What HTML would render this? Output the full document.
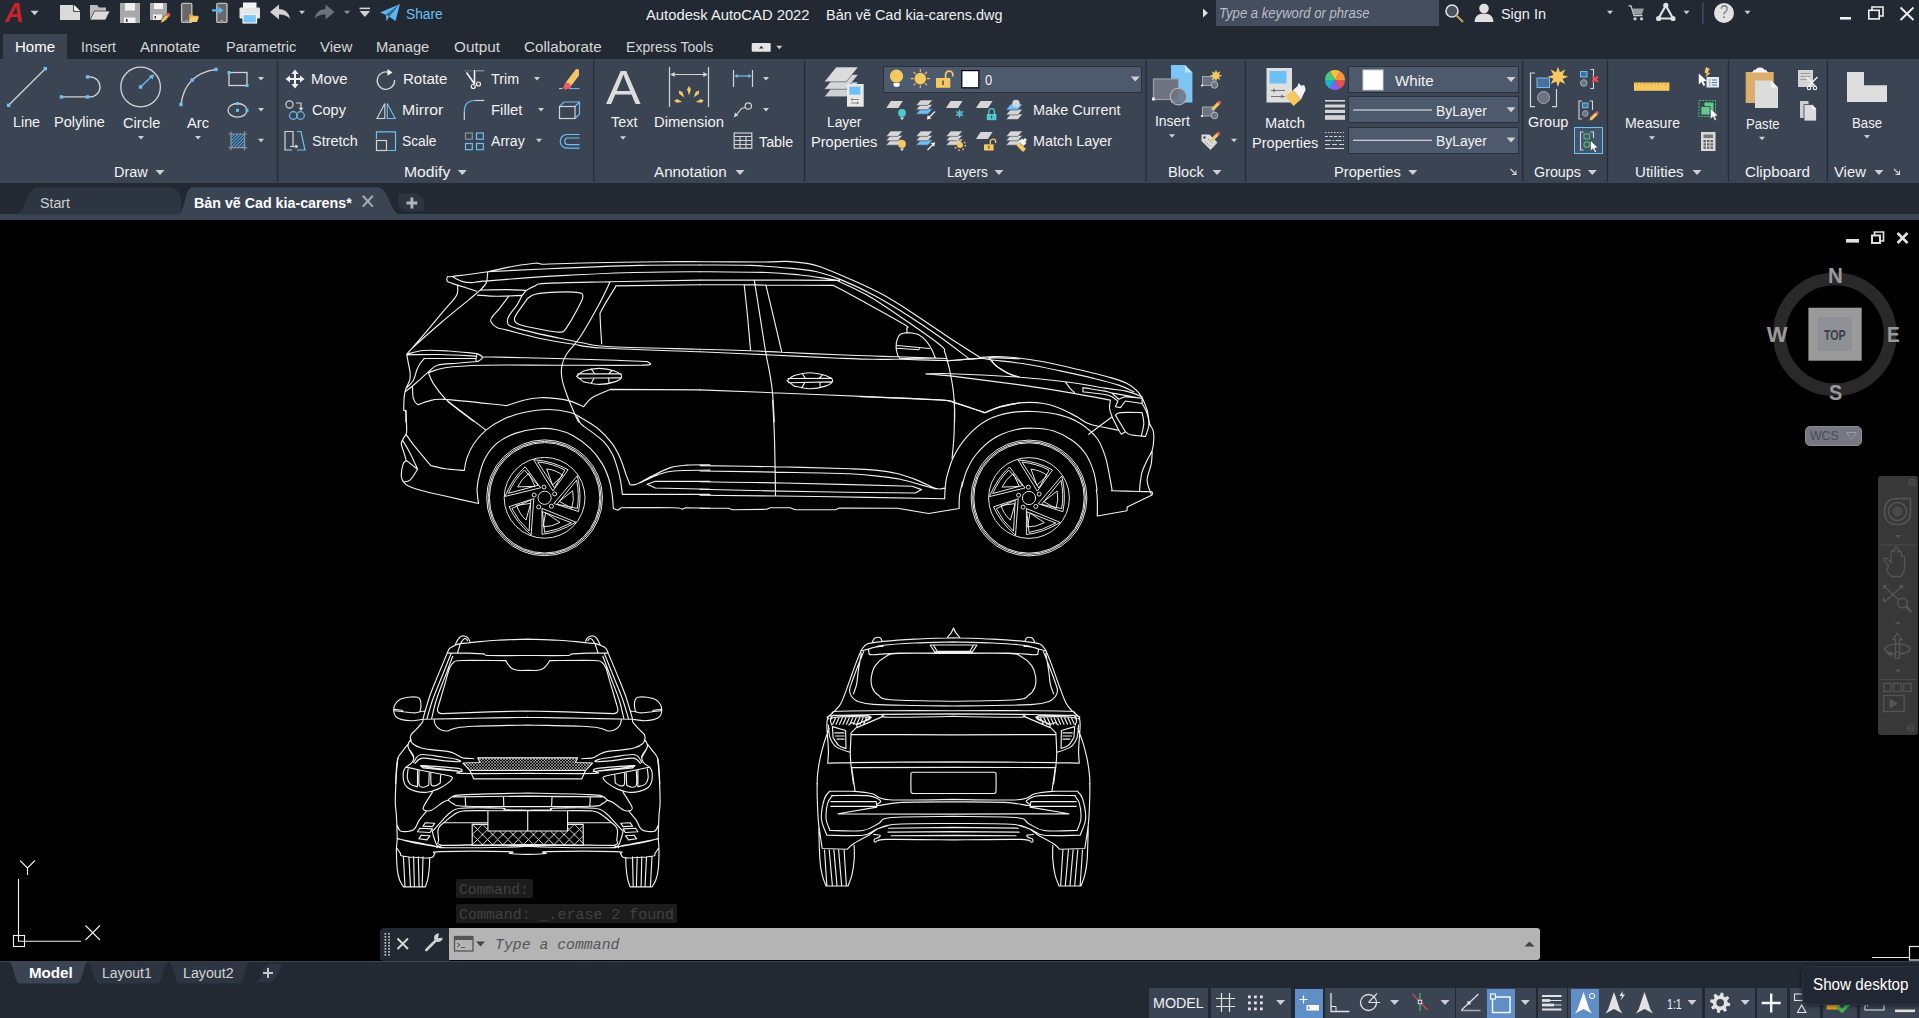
<!DOCTYPE html>
<html lang="en"><head><meta charset="utf-8"><title>Autodesk AutoCAD 2022 - Bản vẽ Cad kia-carens.dwg</title>
<style>
html,body{margin:0;padding:0;background:#222933;overflow:hidden}
#app{position:relative;width:1919px;height:1018px;overflow:hidden;background:#222933;font-family:"Liberation Sans",sans-serif}
#app div{position:absolute}
#app svg{position:absolute;left:0;top:0}
.t{position:absolute;white-space:pre;line-height:1;transform-origin:0 0;display:block}
.m{font-family:"Liberation Mono",monospace}
</style></head>
<body>
<div id="app">
<div class="titlebar" style="left:0px;top:0px;width:1919px;height:59px;background:#222933;"></div>
<div class="ribbon" style="left:0px;top:59px;width:1919px;height:124px;background:#3b4453;"></div>
<div class="filetabs" style="left:0px;top:183px;width:1919px;height:31px;background:#222933;"></div>
<div style="left:0px;top:214px;width:1919px;height:6px;background:#3b4453;"></div>
<div style="left:3px;top:34px;width:64px;height:25px;background:#3b4453;"></div>
<div style="left:1216px;top:0px;width:223px;height:26px;background:#454e5f;"></div>
<div style="left:882.5px;top:65.5px;width:259px;height:27px;background:#4d596d;border:1.2px solid #2a313d;box-sizing:border-box"></div>
<div style="left:1348.4px;top:66.2px;width:170.2px;height:27px;background:#4d596d;border:1.2px solid #2a313d;box-sizing:border-box"></div>
<div style="left:1348.4px;top:96.3px;width:170.2px;height:27px;background:#4d596d;border:1.2px solid #2a313d;box-sizing:border-box"></div>
<div style="left:1348.4px;top:126.5px;width:170.2px;height:27px;background:#4d596d;border:1.2px solid #2a313d;box-sizing:border-box"></div>
<div style="left:1574px;top:127px;width:29px;height:27px;background:#40566f;border:1.3px solid #6cc0f5;box-sizing:border-box"></div>
<div class="canvas" style="left:0px;top:220px;width:1919px;height:740.5px;background:#000000;"></div>
<div style="left:1805.4px;top:425.6px;width:56.3px;height:20px;background:#757781;border-radius:5px;border:1px solid #8a8c95;box-sizing:border-box"></div>
<div style="left:1878px;top:476px;width:40px;height:259px;background:#383838;border-radius:3px"></div>
<div style="left:456px;top:879px;width:77px;height:19px;background:#1c1c1c;border-radius:2px"></div>
<div style="left:456px;top:904.3px;width:221px;height:18.7px;background:#1c1c1c;border-radius:2px"></div>
<div style="left:379.5px;top:927.5px;width:70px;height:33px;background:#222933;border-radius:4px 0 0 4px"></div>
<div style="left:449px;top:927.5px;width:1091px;height:32.5px;background:#b4b4b4;border-radius:0 3px 3px 0"></div>
<div class="statusbar" style="left:0px;top:960.5px;width:1919px;height:57.5px;background:#222933;"></div>
<div style="left:0px;top:960.5px;width:1919px;height:1.3px;background:#3b4453;"></div>
<div style="left:1149.4px;top:988px;width:58.3px;height:30px;background:#3b4453;"></div>
<div style="left:1210.8px;top:988px;width:80.2px;height:30px;background:#3b4453;"></div>
<div style="left:1325px;top:988px;width:129.6px;height:30px;background:#3b4453;"></div>
<div style="left:1456px;top:988px;width:79.8px;height:30px;background:#3b4453;"></div>
<div style="left:1537.7px;top:988px;width:29.2px;height:30px;background:#3b4453;"></div>
<div style="left:1568.3px;top:988px;width:134.0px;height:30px;background:#3b4453;"></div>
<div style="left:1705px;top:988px;width:50.4px;height:30px;background:#3b4453;"></div>
<div style="left:1756.9px;top:988px;width:29.8px;height:30px;background:#3b4453;"></div>
<div style="left:1789.8px;top:988px;width:30.2px;height:30px;background:#3b4453;"></div>
<div style="left:1823px;top:988px;width:33.5px;height:30px;background:#3b4453;"></div>
<div style="left:1859.6px;top:988px;width:59.4px;height:30px;background:#3b4453;"></div>
<div style="left:1294.6px;top:988.5px;width:28.7px;height:29.5px;background:#5f8fc6;"></div>
<div style="left:1486.9px;top:988.5px;width:28.1px;height:29.5px;background:#5f8fc6;"></div>
<div style="left:1571px;top:988.5px;width:28px;height:29.5px;background:#5f8fc6;"></div>
<svg id="drawing" width="1919" height="1018" viewBox="0 0 1919 1018" fill="none">
<g id="car-side">
<path d="M447.6 276.7C448.6 276.6 446.8 277 453.4 276.2C460.1 275.4 477.6 273.4 487.7 271.7C497.7 270 505.3 267.6 513.5 266.2C521.7 264.7 533 263.6 536.9 263L541.9 264.2C548.6 264 562.2 263.4 582 263C601.7 262.6 640.8 261.9 660.5 261.7C680.1 261.5 693.4 261.7 700 261.7M487.7 271.7C497.8 271.2 523.1 269.8 548.6 268.7C574.1 267.6 615.2 266 640.4 265.4C665.7 264.7 690.1 265.1 700 265M452.6 276.7C454.1 277.5 458.6 280.4 461.8 281.4C465 282.4 467.6 282.6 471.8 282.6C476 282.5 472.6 282 486.8 280.9C501 279.8 532.5 277.3 556.9 275.9C581.4 274.5 609.9 273.2 633.7 272.5C657.6 271.8 689 271.8 700 271.7M447.6 276.7C447.5 277.1 446.6 278.3 446.8 279.2C446.9 280.1 446.5 281 448.4 282.1C450.4 283.1 453.7 283.9 458.4 285.4C463.2 286.9 473.8 290.3 476.8 291.2M487.7 271.7C487.6 272.5 487.6 274.8 487.3 276.7C487.1 278.7 487.2 281.2 486 283.4C484.8 285.6 483.1 287.3 480.2 290.1C477.2 292.8 475.1 294.5 468.5 300.1C461.8 305.6 449.5 315.4 440.1 323.5C430.6 331.5 416.4 344.3 411.7 348.5M457.6 285.4C457.6 286.4 458 289.7 457.6 291.7C457.2 293.8 458 293.7 455.1 297.6C452.2 301.5 445.4 308.8 440.1 315.1C434.8 321.4 429 328.6 423.4 335.1C417.8 341.7 409.5 351.1 406.7 354.3M480.2 290.1C484.6 290 499.2 289.5 506.9 289.6C514.5 289.6 522.9 290.3 526.1 290.4C527.6 289.6 532 287.1 535.2 285.9C538.4 284.7 532.7 284.1 545.3 283.4C557.8 282.7 584.6 282.3 610.4 281.7C636.2 281.2 685.1 280.3 700 280.1M477.6 295.1C480.8 295.3 489.5 296.2 496.8 296.2C504.2 296.3 517.7 295.5 521.9 295.4M526.1 290.4C525.4 291.3 523.4 293.5 521.9 295.9C520.4 298.4 519 301.9 516.9 305.1C514.8 308.3 511 312.3 509.4 315.1C507.8 317.9 507.2 320 507.4 321.8C507.5 323.6 507.5 324.6 510.2 326C512.9 327.4 515.8 328.2 523.6 330.1C531.3 332.1 547.2 335.6 556.9 337.6C566.7 339.7 573.6 341.2 582 342.7C590.3 344.1 587.4 345.4 607 346.5C626.7 347.6 684.5 348.7 700 349.2M527.7 298.4C529 297.7 530.4 295.3 535.2 294.2C540.1 293.2 549.7 292.3 556.9 292.1C564.2 291.8 574.3 291.9 578.6 292.6C583 293.2 582.5 294.1 582.8 295.9C583.1 297.7 583 298.3 580.3 303.4C577.7 308.6 570.3 322 567 326.8C563.6 331.6 564.7 331.7 560.3 332.1C555.8 332.6 547.2 330.6 540.3 329.3C533.3 328 522.9 326 518.5 324.3C514.2 322.6 514.7 321.1 514.4 319.3C514.1 317.5 516.5 314.4 516.9 313.4zM508.5 296.7C507.1 298.6 503 304.1 500.2 307.6C497.4 311.1 493.4 315.2 491.8 317.6C490.3 320 490.2 320.1 491 321.8C491.8 323.5 494.2 326.2 496.8 327.6C499.5 329 499.6 328.3 506.9 330.1C514.1 331.9 529.1 336.1 540.3 338.5C551.4 340.8 563.3 342.7 573.6 344.3C583.9 345.9 581 346.7 602 348C623.1 349.2 683.7 351.2 700 351.8M610 282.1C608.1 285.9 603.6 296 598.7 305.1C593.7 314.2 585.6 328.7 580.3 336.8C575 344.9 570 348.8 567 353.5C563.9 358.2 562.8 361 562 365.2C561.1 369.4 561.1 373.5 562 378.5C562.8 383.6 564.7 389.1 567 395.2C569.2 401.4 573.4 410.8 575.3 415.3C577.3 419.7 578.1 420.8 578.6 422M615.4 287.1C613.7 289.8 607.9 299.1 605.4 303.4C602.8 307.8 600.9 311.5 600 313.1C600.1 315.7 600.4 323.3 600.7 328.5C601 333.6 601.5 341.3 601.7 343.8M615.4 285.9L700 284.7M406.7 354.3C409.5 353.7 416.4 351.1 423.4 350.5C430.3 349.9 439.5 350.5 448.4 351C457.3 351.5 472.1 353.1 476.8 353.5C477.6 353.9 480.7 355.1 481.5 356C482.3 356.9 482.5 357.9 481.8 358.8C481.2 359.8 478.3 361.1 477.6 361.5C477.4 361.3 476.1 361.4 476 360.2C475.8 359 476.7 355.3 476.8 354.3M406.7 354.8C412.3 354.8 428.4 354.3 440.1 354.5C451.8 354.7 470.7 355.9 476.8 356.2M475.1 358.5L424.2 358.5C423.5 359.3 421.3 361.6 420.1 363.5C418.8 365.5 417.8 367.4 416.7 370.2C415.6 373 415.2 377.2 413.4 380.2C411.6 383.3 407.1 387.2 405.9 388.6M477.6 361.5C474.2 361.8 463.5 362.6 456.8 363.2C450.1 363.8 442.3 363.7 437.6 365.2C432.8 366.6 431.3 369.5 428.4 371.9C425.5 374.2 422.6 377.2 420.1 379.4C417.5 381.6 415.9 383.1 413.4 385.2C410.9 387.3 406.4 390.8 405 391.9M481.8 356.8C494.3 357.1 534.7 358 556.9 358.5C579.2 359.1 600.4 359.7 615.4 360.2C630.4 360.7 641.8 361.3 647.1 361.5L650.4 363.5C648.8 363.8 656 364.9 640.4 365.2C624.8 365.5 583.1 365.2 556.9 365.2C530.8 365.2 502.1 364.8 483.5 365.2C464.8 365.6 454.3 366.4 445.1 367.7C435.9 368.9 431.2 371.9 428.4 372.7M406.7 354.3C407 355.9 407.8 360.6 408.4 363.5C408.9 366.4 409.8 369.1 410 371.9C410.3 374.7 410.4 377.4 409.7 380.2C409 383 406.8 385.8 405.9 388.6C404.9 391.3 404.6 393.3 404.2 396.9C403.8 400.5 403.8 408 403.7 410.3L405.9 411.1L405.9 422M412.5 386.9C412.7 388.8 412.5 395.7 413.4 398.6C414.2 401.5 416.3 403.6 417.5 404.4C418.8 405.3 419.1 404.1 420.9 403.6C422.7 403 424.4 401.8 428.4 401.1C432.4 400.4 432 398.7 445.1 399.4C458.2 400.2 496.6 404.6 506.9 405.6C509.6 404.7 518 401.6 523.6 400.3C529.1 398.9 534.7 398 540.3 397.7C545.8 397.5 551.9 398 556.9 398.6C562 399.1 565.8 399.7 570.3 401.1C574.8 402.4 581.4 405.7 583.7 406.6C585 405.1 587.6 400.6 592 397.7C596.5 394.9 607.3 390.8 610.4 389.4L700 389.9M428.4 372.7C429.2 374.5 430.6 379.2 433.4 383.6C436.2 387.9 441.2 394.4 445.1 398.6C449 402.8 452 404.8 456.8 408.6C461.5 412.4 470.7 419 473.5 421.1M576.6 376.4C577.8 375.5 579.9 372.4 583.7 371C587.4 369.7 594 368.4 599.2 368.4C604.3 368.4 610.8 369.7 614.5 371C618.3 372.4 621.7 374.6 621.7 376.4C621.7 378.2 618.3 380.6 614.5 381.9C610.8 383.2 604.3 384.4 599.2 384.4C594 384.4 586.2 382.3 583.7 381.9zM577.8 373.9L621.2 373.9M578.3 378.2L620.4 377.7M591.2 368.9L594.5 373.5M612 370.5L608.7 373.9M591.2 383.6L594 378.2M609 382.7L608.7 377.9" stroke="#f0f0f0" stroke-width="1.15" fill="none" stroke-linejoin="round" stroke-linecap="round"/>
<path d="M700 261.7C710.6 261.7 749 262.1 763.4 262C777.9 262 779.6 261.1 786.8 261.4C794 261.6 801.3 262.5 806.8 263.4C812.4 264.2 813 264.1 820.2 266.7C827.4 269.3 839.7 274.5 850.3 279.2C860.8 283.9 872.5 289 883.6 295.1C894.8 301.2 905.9 308.7 917 315.9C928.2 323.2 939.8 331.5 950.4 338.5C961 345.4 975.5 354.5 980.5 357.7M700 265C708.3 265.1 734.8 264.8 750.1 265.4C765.4 265.9 780.7 267.3 791.8 268.4C802.9 269.4 808.5 269.8 816.9 271.7C825.2 273.7 832.2 276 841.9 280.1C851.6 284.1 864.2 289.9 875.3 295.9C886.4 301.9 897.6 308.8 908.7 315.9C919.8 323 932.1 331.4 942.1 338.5C952.1 345.6 964.3 355.2 968.8 358.5M700 271.7C711.1 271.8 750.1 272 766.8 272.5C783.5 273.1 790.4 274.1 800.2 275C809.9 276 819.1 277.5 825.2 278.4C831.3 279.3 834.9 280.1 836.9 280.4M700 280.1C709 280.1 732.3 280 754.3 280.1C776.2 280.1 818.1 280.3 831.9 280.4C845.7 280.4 836.1 280.4 836.9 280.4C841.9 282.8 856.4 289 866.9 295.1C877.5 301.1 888.1 308.4 900.3 316.8C912.6 325.1 933 339.3 940.4 345.2C947.8 351 943.5 349.6 944.6 351.8C945.6 354.1 946.4 357.4 946.7 358.5M700 284.7C707.4 284.7 733.2 284.7 744.2 284.7C755.2 284.8 751.1 284.9 765.9 285.1C780.8 285.2 822.3 285.3 833.6 285.4C839.1 288.4 855.1 296.9 866.9 303.4C878.8 310 897.9 320.5 904.5 324.6C911.1 328.8 906.3 327.1 906.7 328.5C907.1 329.8 907 331.9 907 332.6M744.2 284.7C744.8 290.1 746.5 305.8 747.6 316.8C748.6 327.8 750.1 345 750.6 350.7M754.3 280.1C755.2 286.2 758.2 304.5 760.1 316.8C762 329 764.3 343.8 765.9 353.5C767.6 363.2 769 368.5 770.1 375.2C771.2 381.9 771.9 385.8 772.6 393.6C773.3 401.4 774 417.2 774.3 422M765.9 285.1C767.2 290.3 770.8 305.6 773.5 316.8C776.1 328 780.4 346.3 781.8 352.2M700 349.2C708.3 349.4 736.4 350.2 750.1 350.7C763.7 351.2 767.1 351.5 781.8 352.2C796.5 352.9 823.3 354.2 838.6 354.8C853.9 355.5 863.9 355.7 873.6 356C883.4 356.3 884.8 356.4 897 356.8C909.2 357.3 938.5 358.2 946.7 358.5M700 351.8C711.1 352.3 743.7 353.8 766.8 354.8C789.9 355.9 820.8 357.4 838.6 358.2C856.4 358.9 863.3 359.2 873.6 359.3C883.9 359.5 888.1 359.2 900.3 359.3C912.6 359.5 935.9 360.5 947.1 360.5C958.2 360.5 960.2 359.8 967.1 359.3C974.1 358.9 980 357.8 988.8 357.7C997.6 357.6 1014.7 358.7 1019.9 358.8M907 332.6C905.9 332.9 902 333.1 900.3 334.3C898.7 335.6 897.7 337.8 897 340.2C896.3 342.5 896 346 896.2 348.5C896.3 351 897.2 353.5 897.8 355.2C898.5 356.8 899.6 358 900 358.5L935.4 358.2C934.7 356.6 932.9 351.5 931.2 348.5C929.5 345.5 927.5 342.4 925.4 340.2C923.3 337.9 920.9 336 918.7 334.8C916.5 333.6 913.1 333.3 912 333zM897 345.5L929.5 348.5M897 348.2L918.7 349.8L920 347.7M946.7 358.5C947.4 361 949.3 368 950.4 373.5C951.5 379.1 952.7 385.8 953.4 391.9C954.1 398 954.4 405.3 954.6 410.3C954.8 415.3 954.6 420 954.6 422M988.8 357.7C989.9 358.9 992.7 362.8 995.5 365.2C998.3 367.6 1002.7 370.2 1005.5 371.9C1008.3 373.5 1011.1 374.7 1012.2 375.2M787.1 380.7C788.3 379.9 790.5 376.9 794.3 375.5C798.1 374.2 804.6 372.7 809.8 372.7C815.1 372.7 821.7 374.2 825.5 375.5C829.4 376.9 832.7 379 832.7 380.7C832.7 382.5 829.4 384.7 825.5 386.1C821.7 387.4 815.1 388.7 809.8 388.7C804.6 388.7 796.9 386.5 794.3 386.1zM788.1 378.5L831.9 378.2M788.5 382.7L831.6 381.9M802.2 373.5L805.2 378.2M822.7 374.9L819.4 378.2M801.8 387.9L804.8 382.4M820.2 387.2L819.9 382.2M700 389.9C712.1 390.4 743.7 391.6 772.6 392.7C801.6 393.9 845.1 395.7 873.6 396.9C902.1 398.2 930.1 399.3 943.7 400.3C957.4 401.2 948.6 400.7 955.4 402.8C962.2 404.8 979.8 411.1 984.6 412.8C987.3 411.8 994.6 408.6 1000.5 406.9C1006.4 405.3 1016.6 403.5 1019.9 402.8" stroke="#f0f0f0" stroke-width="1.15" fill="none" stroke-linejoin="round" stroke-linecap="round"/>
<path d="M979.4 357.5C981.2 357.4 985.1 356.8 990.2 356.7C995.4 356.7 1001.3 356.4 1010.3 357.2C1019.2 358 1032.5 359.7 1043.6 361.7C1054.8 363.7 1065.9 366.6 1077 369.2C1088.2 371.9 1102.1 375.2 1110.4 377.6C1118.8 379.9 1122.7 381.2 1127.1 383.4C1131.6 385.6 1134.6 388.6 1137.1 390.9C1139.6 393.3 1141.3 396.5 1142.1 397.6M946.8 360.9C952.4 360.5 973 358.6 980.2 358.4C987.4 358.2 982.4 358.7 990.2 359.7C998 360.7 1015.3 362.4 1026.9 364.2C1038.6 366.1 1049.2 368.5 1060.3 370.9C1071.5 373.3 1084 376 1093.7 378.4C1103.5 380.8 1112.1 382.9 1118.8 385.1C1125.4 387.3 1131.3 390.7 1133.8 391.8M989.4 357.5C990.4 358.8 992.6 362.7 995.2 365.1C997.9 367.4 1002.2 370 1005.2 371.7C1008.3 373.5 1011.1 374.5 1013.6 375.4C1016.1 376.3 1019.2 376.9 1020.3 377.2M925.9 373.9C930 373.9 934.4 373.2 950.2 373.7C965.9 374.3 1001.1 375.9 1020.3 377.2C1039.5 378.6 1050.9 379.9 1065.3 381.8C1079.8 383.6 1096.8 386.8 1107.1 388.4C1117.4 390 1121.3 390 1127.1 391.4C1133 392.8 1139.6 395.9 1142.1 396.8M925.9 373.9C930 374.2 933.3 373.9 950.2 375.9C967 377.9 1006.4 383 1026.9 385.9C1047.5 388.8 1059.8 391.1 1073.7 393.4C1087.6 395.8 1104.3 399 1110.4 400.1M1065.3 381.8C1066 382.7 1068 385.8 1069.5 387.6C1071 389.4 1073.7 391.8 1074.5 392.6M1082.9 387.6C1086.3 388.2 1098.6 390 1103.7 390.9C1108.9 391.9 1107.6 392.2 1113.8 393.4C1119.9 394.6 1136 397.3 1140.5 398.1M1082.9 391.8C1086.3 392.2 1098.9 393.4 1103.7 394.3C1108.6 395.1 1110.7 396.4 1112.1 396.8M1082.9 387.6L1082.9 391.8M1112.1 393.4L1118.8 399.3L1124.6 396.8L1142.1 398.1L1142.1 403.5L1125.4 401L1120.4 407.6L1115.4 406.8L1117.9 401L1112.1 396.8M1110.4 400.1C1110.3 401.5 1109.3 405.7 1109.6 408.5C1109.9 411.2 1110.7 413.5 1112.1 416.8C1113.5 420.2 1116.4 425.6 1117.9 428.5C1119.5 431.4 1120.7 433.4 1121.3 434.3L1125.4 431.8L1115.4 415.1C1116.3 414.7 1116 413.1 1120.4 412.6C1124.9 412.2 1138.5 412.6 1142.1 412.6M1125.4 431.8C1126.3 432.3 1127.1 434.1 1130.5 434.8C1133.8 435.6 1143 436.2 1145.5 436.5C1146 434.6 1148.5 429 1148.8 425.2C1149.1 421.3 1148.3 417.1 1147.1 413.5C1146 409.9 1143 405.1 1142.1 403.5M1142.1 412.6C1142.4 414.4 1143.9 419.6 1143.8 423.5C1143.7 427.4 1141.7 433.9 1141.3 436M1142.1 397.6C1143 399.7 1145.9 405.8 1147.1 410.1C1148.4 414.4 1148.7 420.2 1149.6 423.5C1150.6 426.8 1152.3 427.7 1153 430.2C1153.7 432.7 1154 435.2 1153.8 438.5C1153.7 441.9 1153.3 446.6 1152.2 450.2C1151 453.8 1148.8 456.6 1147.1 460.2C1145.5 463.8 1143.3 468 1142.1 471.9C1141 475.8 1140.6 480.4 1140.1 483.6C1139.7 486.8 1139.7 489.8 1139.6 491.1M1152.2 450.2C1152 452.4 1152.2 458.5 1151.3 463.6C1150.5 468.6 1147.1 475.1 1147.1 480.3C1147.1 485.4 1150.6 492.1 1151.3 494.4M1112.1 416.8L1088.7 434.3M945.1 488.6C945.4 486.6 945.4 482.2 946.8 476.9C948.2 471.6 950.2 463.6 953.5 456.9C956.8 450.2 961.3 443 966.8 436.8C972.4 430.7 979.6 424.2 986.9 420.2C994.1 416.1 1002.5 414.1 1010.3 412.6C1018 411.2 1025.3 411.1 1033.6 411.5C1042 411.9 1052.5 413.1 1060.3 415.1C1068.1 417.1 1074.2 419.6 1080.4 423.5C1086.5 427.4 1092.9 432.9 1097.1 438.5C1101.2 444.1 1103.2 449.9 1105.4 456.9C1107.6 463.8 1109.3 474.7 1110.4 480.3C1111.5 485.8 1111.8 488.6 1112.1 490.3M961.8 486.9C962.7 484.1 964.3 475.8 966.8 470.2C969.3 464.7 972.4 458.8 976.9 453.5C981.3 448.3 987.4 442.4 993.6 438.5C999.7 434.6 1006.9 431.9 1013.6 430.2C1020.3 428.4 1026.9 428 1033.6 428.2C1040.3 428.3 1047.3 429 1053.7 431C1060.1 433 1066.7 436.4 1072 440.2C1077.3 443.9 1081.8 448.3 1085.4 453.5C1089 458.8 1091.8 465.8 1093.7 471.9C1095.7 478 1096.5 487.2 1097.1 490.3M985.2 412.6C988 411.5 995.5 407.6 1001.9 406C1008.3 404.3 1016.6 403 1023.6 402.6C1030.6 402.2 1037.5 402.5 1043.6 403.5C1049.8 404.4 1054.8 406.2 1060.3 408.5C1065.9 410.7 1072 414.2 1077 416.8C1082 419.5 1083.4 422.1 1090.4 424.3C1097.3 426.5 1114 429.2 1118.8 430.2M860 396.8C868.3 397.1 896.2 397.9 910.1 398.4C924 399 936.1 399.4 943.5 400.1C950.8 400.8 947.4 400.5 954.3 402.6C961.3 404.7 980.1 411 985.2 412.6" stroke="#f0f0f0" stroke-width="1.15" fill="none" stroke-linejoin="round" stroke-linecap="round"/>
<path d="M464.3 470.5C464.7 468.4 465.3 462.8 466.8 458.4C468.3 454.1 470.3 449 473.5 444.2C476.7 439.5 481 434.2 486 430.1C491 425.9 497.3 422.1 503.5 419.2C509.8 416.3 516 414.1 523.6 412.5C531.1 410.9 540.8 409.5 548.6 409.5C556.4 409.5 564.7 411 570.3 412.5C575.9 414 577.3 415.6 582 418.4C586.7 421.1 593.7 425 598.7 429.2C603.7 433.4 608.4 438.5 612 443.4C615.7 448.3 618 453.1 620.4 458.4C622.7 463.7 624.6 470.7 626.2 475.1C627.8 479.5 629.4 483.2 630.1 484.8C631.2 484.7 633.7 485.3 637.1 484C640.5 482.6 644.9 479.5 650.4 476.8C656 474.1 664.3 469.6 670.5 467.6C676.6 465.7 680.6 465.6 687.2 465.1C693.7 464.6 706.1 464.8 709.9 464.8M577 416.7C577.7 417.9 578.9 421.8 581.2 424.2C583.4 426.6 586.6 428 590.3 430.9C594.1 433.8 600.1 438 603.7 441.7C607.3 445.5 609.8 449.2 612 453.4C614.3 457.6 615.7 462.3 617 466.8C618.4 471.2 619.5 475.5 620.4 480.1C621.3 484.7 622.1 492 622.4 494.3L709.9 494.3M478.5 503.5C478.3 501 476.9 493.8 477.1 488.5C477.4 483.2 478.7 477.1 480.2 471.8C481.6 466.5 483.2 461.5 486 456.8C488.8 452 492 447.3 496.8 443.4C501.7 439.5 508.5 435.8 515.2 433.4C521.9 430.9 530 429.3 536.9 428.7C543.9 428.1 550.8 428.5 556.9 429.7C563.1 430.9 568.1 432.8 573.6 435.9C579.2 439 585.6 443.8 590.3 448.4C595.1 453 599 458.4 602 463.4C605.1 468.4 607 473.5 608.7 478.5C610.4 483.5 611.3 488.5 612 493.5C612.8 498.5 613.1 506 613.4 508.5L617.9 510.2L621.2 507.7C630 507.7 663.7 507.4 673.8 507.7C684 508 680.8 509.1 682.2 509.3L685.5 507.7L709.9 508.2M405.9 410C406 413.4 406.7 426 406.7 430.1C406.7 434.1 406.6 432.6 405.9 434.2C405.2 435.9 403.3 438.4 402.5 440.1C401.8 441.7 401.1 442 401.4 444.2C401.6 446.5 403.4 450.8 404.2 453.4C404.9 456.1 406 458.4 405.9 460.1C405.7 461.8 404.1 461.8 403.4 463.4C402.7 465.1 402 467.9 401.7 470.1C401.4 472.3 401.1 474.8 401.4 476.8C401.6 478.7 402.2 480.3 403.4 481.8C404.5 483.3 405 484.4 408.4 486C411.7 487.5 416.7 489.2 423.4 491C430.1 492.8 439.2 494.7 448.4 496.8C457.6 498.9 473.5 502.4 478.5 503.5M405.9 434.2C407.4 436.3 412.1 443 415 446.7C418 450.5 420.7 453.6 423.4 456.8C426 459.9 429.6 464.1 430.9 465.6C433.3 466.1 439.5 468 445.1 468.8C450.7 469.6 461.1 470.2 464.3 470.5M448.4 401.7L486 430.1M402.5 440.1C403.5 441.7 406.3 446.2 408.4 450.1C410.5 454 413.5 460.2 415 463.4C416.6 466.6 417.1 468.3 417.5 469.3C416.3 471.1 412.4 478 410 480.1C407.7 482.2 404.5 481.5 403.4 481.8M405.9 460.1L417.5 469.3M647.1 484.3L655.4 481.3L709.9 481.3M647.1 484.3L655.4 488L709.9 489.3M640.4 482.6C643.2 481.4 651.5 477.1 657.1 475.1C662.7 473.2 665 471.8 673.8 471C682.6 470.1 703.9 470.3 709.9 470.1" stroke="#f0f0f0" stroke-width="1.15" fill="none" stroke-linejoin="round" stroke-linecap="round"/>
<path d="M700 465.6C712.5 465.8 750.1 466.2 775.1 466.8C800.2 467.3 833.6 468.2 850.3 468.8C866.9 469.3 867.5 469.3 875.3 470.1C883.1 470.9 890 471.8 897 473.5C904 475.1 910.5 477.6 917 480.1C923.6 482.6 931.6 487.1 936.2 488.5C940.8 489.8 943.2 488.2 944.6 488.1M700 471C712.5 471.1 750.1 471.6 775.1 472.1C800.2 472.6 832.2 473 850.3 473.8C868.3 474.6 875.3 475.9 883.6 476.8C892 477.7 893.9 477.9 900.3 479.3C906.7 480.7 916.1 483.5 922 485.1C928 486.8 933.9 488.3 936.2 489M700 481.8C713.9 482 748.1 482.2 783.5 483C818.8 483.7 890.6 485.8 912 486.3L921.7 489.6L915.4 493C898.9 492.8 852.8 492.4 816.9 491.8C781 491.2 719.5 489.7 700 489.3M700 495.2C719.5 495.4 776.1 495.9 816.9 496.5C857.6 497.1 923.3 498.4 944.6 498.8L945.1 488.5M772.6 400C772.9 405.6 773.9 422.3 774.3 433.4C774.7 444.5 774.9 456.5 775.1 466.8C775.3 477.1 775.4 490.4 775.5 495.2M959.1 508.5C959.2 506.3 959 499.6 959.6 495.2C960.2 490.7 962 484 962.4 481.8M700 508.2L728.4 508.2L732.6 509.8L766.8 509.3L770.1 507.7L790.2 507.7L795.2 509.7L835.2 509.7L839.4 508L897 508.2L928.7 513.5L959.1 508.5M954.6 400C954.5 405.6 954.5 423.7 954.1 433.4C953.7 443.1 952.4 454.3 952.1 458.4" stroke="#f0f0f0" stroke-width="1.15" fill="none" stroke-linejoin="round" stroke-linecap="round"/>
<path d="M1096.3 490C1096.5 491.5 1097.2 494.4 1097.3 498.8C1097.5 503.1 1097.3 513.2 1097.3 516L1127 510.7L1127.2 506.9L1152 495M1111.3 490.7C1115.9 490.8 1132.2 491.3 1138.8 491.5C1145.5 491.7 1149.2 491.3 1151.4 491.9C1153.5 492.5 1151.9 494.5 1152 495" stroke="#f0f0f0" stroke-width="1.15" fill="none" stroke-linejoin="round" stroke-linecap="round"/>
<g stroke="#f0f0f0" stroke-width="0.95" fill="none" stroke-linejoin="round">
<circle cx="544.6" cy="497.8" r="57.9"/><circle cx="544.6" cy="497.8" r="56.4"/><circle cx="544.6" cy="497.8" r="55.2"/>
<circle cx="544.6" cy="497.8" r="40.4"/><circle cx="544.6" cy="497.8" r="6.6"/>
<path d="M533.7 459.7Q553.7 461.4 568.1 469.8L552.9 490.9zM537.6 461.9Q553.1 463.6 564.8 470L554.5 487.9zM546.6 468.9Q555.8 470 562.9 475.3L552.5 485.1zM546 487a2 2 0 1 0 -4 0a2 2 0 1 0 4 0M577.4 475.7Q582 495.2 578.5 511.5L553.8 503.5zM576.6 480.1Q579.7 495.3 577.3 508.4L557.1 504.2zM572.7 490.8Q574.5 499.9 571.7 508.2L559.2 501.4zM556.7 493.9a2 2 0 1 0 -4 0a2 2 0 1 0 4 0M575.8 522.2Q558.6 532.6 542 534.3L542 508.3zM571.4 522.8Q557.8 530.4 544.6 532.2L542.4 511.6zM560 522.4Q551.9 526.9 543.1 526.8L545.6 512.8zM553.4 506.2a2 2 0 1 0 -4 0a2 2 0 1 0 4 0M531.1 535Q515.9 521.9 509.1 506.7L533.8 498.6zM529.1 531Q517.6 520.4 511.9 508.4L530.8 500zM526 520Q519.2 513.7 516.6 505.3L530.7 503.4zM540.7 506.9a2 2 0 1 0 -4 0a2 2 0 1 0 4 0M505 496.4Q512.8 477.9 525.2 466.8L540.6 487.8zM508.3 493.3Q514.7 479.1 524.4 470L538.2 485.3zM517.7 486.9Q521.6 478.5 528.8 473.5L535 486.3zM536.2 495a2 2 0 1 0 -4 0a2 2 0 1 0 4 0"/></g>
<g stroke="#f0f0f0" stroke-width="0.95" fill="none" stroke-linejoin="round">
<circle cx="1029" cy="498" r="57.9"/><circle cx="1029" cy="498" r="56.4"/><circle cx="1029" cy="498" r="55.2"/>
<circle cx="1029" cy="498" r="40.4"/><circle cx="1029" cy="498" r="6.6"/>
<path d="M1018.1 459.9Q1038.1 461.6 1052.5 470L1037.3 491.1zM1022 462.1Q1037.5 463.8 1049.2 470.2L1038.9 488.1zM1031 469.1Q1040.2 470.2 1047.3 475.5L1036.9 485.3zM1030.4 487.2a2 2 0 1 0 -4 0a2 2 0 1 0 4 0M1061.8 475.9Q1066.4 495.4 1062.9 511.7L1038.2 503.7zM1061 480.3Q1064.1 495.5 1061.7 508.6L1041.5 504.4zM1057.1 491Q1058.9 500.1 1056.1 508.4L1043.6 501.6zM1041.1 494.1a2 2 0 1 0 -4 0a2 2 0 1 0 4 0M1060.2 522.4Q1043 532.8 1026.4 534.5L1026.4 508.5zM1055.8 523Q1042.2 530.6 1029 532.4L1026.8 511.8zM1044.4 522.6Q1036.3 527.1 1027.5 527L1030 513zM1037.8 506.4a2 2 0 1 0 -4 0a2 2 0 1 0 4 0M1015.5 535.2Q1000.3 522.1 993.5 506.9L1018.2 498.8zM1013.5 531.2Q1002 520.6 996.3 508.6L1015.2 500.2zM1010.4 520.2Q1003.6 513.9 1001 505.5L1015.1 503.6zM1025.1 507.1a2 2 0 1 0 -4 0a2 2 0 1 0 4 0M989.4 496.6Q997.2 478.1 1009.6 467L1025 488zM992.7 493.5Q999.1 479.3 1008.8 470.2L1022.6 485.5zM1002.1 487.1Q1006 478.7 1013.2 473.7L1019.4 486.5zM1020.6 495.2a2 2 0 1 0 -4 0a2 2 0 1 0 4 0"/></g>
</g>
<g id="car-front">
<path d="M527.7 639.1C522.6 639.3 505.7 639.7 497.2 640.2C488.8 640.6 481.9 641.4 476.9 641.9C472 642.4 469.1 642.8 467.5 643M527.7 639.1C532.8 639.3 549.7 639.7 558.2 640.2C566.7 640.6 573.6 641.4 578.5 641.9C583.5 642.4 586.3 642.8 587.9 643M455 645.3C455.6 644.3 457.1 640.6 458.2 639.1C459.2 637.6 460.1 636.7 461.3 636.3C462.5 635.8 464 635.9 465.2 636.3C466.4 636.6 467.5 637.4 468.3 638.3C469.1 639.1 469.6 640.9 469.9 641.4M600.4 645.3C599.9 644.3 598.3 640.6 597.3 639.1C596.2 637.6 595.3 636.7 594.2 636.3C593 635.8 591.4 635.9 590.3 636.3C589.1 636.6 587.9 637.4 587.1 638.3C586.3 639.1 585.8 640.9 585.6 641.4M457.4 653.1C457.9 651.6 459.5 646.1 460.5 643.8C461.5 641.4 462.7 639.9 463.6 639.1C464.5 638.2 465.3 638.5 466 638.8C466.6 639 467.3 640.3 467.5 640.6M598.1 653.1C597.5 651.6 596 646.1 594.9 643.8C593.9 641.4 592.7 639.9 591.8 639.1C590.9 638.2 590.1 638.5 589.5 638.8C588.8 639 588.2 640.3 587.9 640.6M527.7 655.5C521.3 655.5 496.9 655.7 489.4 655.5C482 655.2 486.8 654.3 483.2 653.9C479.5 653.5 473.5 653.3 467.5 653.1C461.5 653 450.6 653.1 447.2 653.1M527.7 655.5C534.1 655.5 558.6 655.7 566 655.5C573.5 655.2 568.6 654.3 572.3 653.9C575.9 653.5 581.9 653.3 587.9 653.1C593.9 653 604.8 653.1 608.2 653.1M447.2 653.1C447.6 652.4 448.3 649.8 449.6 648.4C450.9 647.1 453.1 646.2 455 645.3C457 644.5 459.2 643.8 461.3 643.4C463.4 643.1 466.5 643.1 467.5 643M608.2 653.1C607.8 652.4 607.2 649.8 605.9 648.4C604.6 647.1 602.4 646.2 600.4 645.3C598.5 644.5 596.2 643.8 594.2 643.4C592.1 643.1 589 643.1 587.9 643M527.7 670.3C526 670.3 520.3 670.7 517.6 670.3C514.8 669.9 513 669.2 511.3 668C509.6 666.8 508.3 664.5 507.4 663.3C506.5 662.1 506.1 661.1 505.8 660.6C498.4 660.6 470 660.2 461.3 660.5C452.6 660.8 455.4 661.3 453.5 662.5C451.5 663.8 450.9 664.9 449.6 668C448.3 671.1 447.2 675.9 445.7 681.3C444.1 686.6 441.5 695.3 440.2 700C438.8 704.7 437.8 707.3 437.5 709.4C437.3 711.5 437.9 711.8 438.6 712.5C439.3 713.2 441.2 713.5 441.7 713.6C449.7 713.3 475.1 712.4 489.4 711.9C503.8 711.5 521.3 711.1 527.7 711M527.7 670.3C529.4 670.3 535.2 670.7 537.9 670.3C540.6 669.9 542.4 669.2 544.1 668C545.8 666.8 547.1 664.5 548 663.3C549 662.1 549.4 661.1 549.6 660.6C557 660.6 585.4 660.2 594.2 660.5C602.9 660.8 600 661.3 602 662.5C603.9 663.8 604.6 664.9 605.9 668C607.2 671.1 608.2 675.9 609.8 681.3C611.4 686.6 613.9 695.3 615.3 700C616.6 704.7 617.7 707.3 617.9 709.4C618.2 711.5 617.5 711.8 616.8 712.5C616.1 713.2 614.2 713.5 613.7 713.6C605.8 713.3 580.4 712.4 566 711.9C551.7 711.5 534.1 711.1 527.7 711M447.2 653.1C445.9 656.3 442.3 664.9 439.4 671.9C436.5 678.9 432.8 687.5 430 695.3C427.3 703.2 424.2 714.9 423 718.8M608.2 653.1C609.5 656.3 613.2 664.9 616 671.9C618.9 678.9 622.7 687.5 625.4 695.3C628.2 703.2 631.3 714.9 632.5 718.8M451.1 653.5C449.7 657 445.5 667.5 442.5 675C439.5 682.5 435.8 691.2 433.1 698.5C430.5 705.8 427.9 715.4 426.9 718.8M604.3 653.5C605.8 657 609.9 667.5 612.9 675C615.9 682.5 619.7 691.2 622.3 698.5C624.9 705.8 627.5 715.4 628.6 718.8M452.7 656.3C451.5 659.4 448.4 667.7 445.7 675C442.9 682.3 438.6 692.7 436.3 700C433.9 707.3 432.4 715.7 431.6 718.8M602.8 656.3C603.9 659.4 607.1 667.7 609.8 675C612.5 682.3 616.8 692.7 619.2 700C621.5 707.3 623.1 715.7 623.9 718.8M423 719.3C431.5 719.1 456.3 718.7 473.8 718.3C491.3 718 518.7 717.4 527.7 717.2M632.5 719.3C624 719.1 599.1 718.7 581.7 718.3C564.2 718 536.7 717.4 527.7 717.2M433.9 718.8C434.2 719.8 434.5 723.3 435.5 725C436.5 726.8 438.2 728.4 440.2 729.4C442.1 730.4 444.7 731.2 447.2 731C449.7 730.8 450.6 729 455 728.2C459.5 727.4 461.7 726.8 473.8 726.3C485.9 725.8 518.7 725.3 527.7 725M621.5 718.8C621.3 719.8 621 723.3 620 725C618.9 726.8 617.2 728.4 615.3 729.4C613.3 730.4 610.7 731.2 608.2 731C605.8 730.8 604.8 729 600.4 728.2C596 727.4 593.8 726.8 581.7 726.3C569.5 725.8 536.7 725.3 527.7 725M423 719.3C422.9 719.8 423.4 721 422.2 722.7C421 724.4 417.8 727.8 416 729.7C414.1 731.7 412.2 732.9 411.3 734.4C410.4 736 410.2 737.6 410.5 739.1C410.7 740.7 411.1 742.4 412.8 743.8C414.5 745.2 417 746.7 420.6 747.7C424.3 748.8 430 749.4 434.7 750.1C439.4 750.7 445.1 750.8 448.8 751.6C452.4 752.4 454.3 753.7 456.6 754.7C458.9 755.8 460 757.2 462.9 757.9C465.7 758.5 472 758.5 473.8 758.7M632.5 719.3C632.6 719.8 632.1 721 633.2 722.7C634.4 724.4 637.7 727.8 639.5 729.7C641.3 731.7 643.3 732.9 644.2 734.4C645.1 736 645.2 737.6 645 739.1C644.7 740.7 644.3 742.4 642.6 743.8C640.9 745.2 638.5 746.7 634.8 747.7C631.2 748.8 625.4 749.4 620.7 750.1C616 750.7 610.3 750.8 606.7 751.6C603 752.4 601.2 753.7 598.9 754.7C596.5 755.8 595.5 757.2 592.6 757.9C589.7 758.5 583.5 758.5 581.7 758.7M411.3 739.9C410.9 740.3 409.4 741.1 408.9 742.2C408.4 743.4 407.7 745.1 408.1 746.9C408.5 748.8 410.4 751.5 411.3 753.2C412.2 754.9 413.2 756.4 413.6 757.1M644.2 739.9C644.6 740.3 646 741.1 646.5 742.2C647.1 743.4 647.7 745.1 647.3 746.9C646.9 748.8 645.1 751.5 644.2 753.2C643.3 754.9 642.2 756.4 641.8 757.1M408.9 743C408 744.2 405.3 747.6 403.4 750.1C401.6 752.5 399.1 754.7 398 757.9C396.8 761 396.8 764.5 396.4 768.8C396 773.2 395.8 781.5 395.6 784M646.5 743C647.4 744.2 650.2 747.6 652 750.1C653.8 752.5 656.3 754.7 657.5 757.9C658.6 761 658.6 764.5 659 768.8C659.4 773.2 659.7 781.5 659.8 784M423 719.3C421 719.5 414.8 720.6 411.3 720.7C407.7 720.7 404.5 720.3 401.9 719.6C399.3 718.9 397 717.9 395.6 716.4C394.3 715 393.9 712.9 393.8 711C393.6 709 393.8 706.7 394.9 704.7C395.9 702.8 398.1 700.5 400.3 699.3C402.5 698 405.3 697.6 408.1 697.2C411 696.9 415.5 696.8 417.5 697.2C419.5 697.7 419.8 698.5 420.3 700C420.9 701.5 421 704.3 421 706.3C420.9 708.2 420 710.8 419.9 711.8M632.5 719.3C634.4 719.5 640.7 720.6 644.2 720.7C647.7 720.7 651 720.3 653.6 719.6C656.2 718.9 658.5 717.9 659.8 716.4C661.2 715 661.6 712.9 661.7 711C661.8 709 661.7 706.7 660.6 704.7C659.5 702.8 657.3 700.5 655.1 699.3C652.9 698 650.2 697.6 647.3 697.2C644.4 696.9 640 696.8 637.9 697.2C635.9 697.7 635.7 698.5 635.1 700C634.5 701.5 634.4 704.3 634.5 706.3C634.6 708.2 635.4 710.8 635.6 711.8M394.9 710.7C396.3 710.8 400.2 711.4 403.4 711.8C406.7 712.1 411.7 712.9 414.4 712.9C417.1 712.9 418.2 712.1 419.9 711.8C421.6 711.4 423.8 711.1 424.6 711M660.6 710.7C659.2 710.8 655.3 711.4 652 711.8C648.7 712.1 643.8 712.9 641.1 712.9C638.3 712.9 637.3 712.1 635.6 711.8C633.9 711.4 631.7 711.1 630.9 711M394.9 709.4C396 709.5 400.6 709.8 401.9 710.2C403.2 710.6 402.5 711.5 402.7 711.8M660.6 709.4C659.4 709.5 654.9 709.8 653.6 710.2C652.3 710.6 652.9 711.5 652.8 711.8" stroke="#f0f0f0" stroke-width="1.15" fill="none" stroke-linejoin="round" stroke-linecap="round"/>
<path d="M398 757.8C397.7 760.4 396.9 766.2 396.4 773.4C396 780.7 395.3 794.6 395.3 801.6C395.3 808.6 396.1 809.7 396.4 815.7C396.7 821.6 397.2 831.8 397.2 837.5C397.2 843.3 396.4 844.8 396.4 850C396.4 855.3 396.7 863.9 397.2 868.8C397.7 873.8 398.5 876.8 399.5 879.7C400.6 882.7 402.8 885.6 403.4 886.8L425.3 886.8C425.7 885.6 427 882.7 427.7 879.7C428.3 876.8 428.9 872.5 429.2 868.8C429.6 865.2 429.6 859.7 429.7 857.9M657.5 757.8C657.7 760.4 658.6 766.2 659 773.4C659.5 780.7 660.1 794.6 660.1 801.6C660.1 808.6 659.3 809.7 659 815.7C658.7 821.6 658.3 831.8 658.3 837.5C658.3 843.3 659 844.8 659 850C659 855.3 658.8 863.9 658.3 868.8C657.7 873.8 657 876.8 655.9 879.7C654.9 882.7 652.7 885.6 652 886.8L630.1 886.8C629.7 885.6 628.4 882.7 627.8 879.7C627.1 876.8 626.5 872.5 626.2 868.8C625.9 865.2 625.8 859.7 625.7 857.9M403.4 856.9L405 886.8M652 856.9L650.4 886.8M408.9 856.9L410.5 886.8M646.5 856.9L645 886.8M413.6 856.9L414.4 886.8M641.8 856.9L641.1 886.8M418.3 856.9L419.1 886.8M637.2 856.9L636.4 886.8M423 856.9L422.2 886.8M632.5 856.9L633.2 886.8M397.2 848.5C397.7 849.3 399.3 851.9 400.3 853.2C401.4 854.5 398.5 855.5 403.4 856.3C408.4 857.1 424.8 858.3 430 857.9C435.2 857.5 433 855 434.7 854C436.4 852.9 427.9 852 440.2 851.6C452.4 851.2 496.6 851.3 508.2 851.6C519.8 851.9 506.5 853 509.7 853.5C513 854 524.7 854.3 527.7 854.4M658.3 848.5C657.7 849.3 656.2 851.9 655.1 853.2C654.1 854.5 657 855.5 652 856.3C647.1 857.1 630.6 858.3 625.4 857.9C620.2 857.5 622.4 855 620.7 854C619 852.9 627.5 852 615.3 851.6C603 851.2 558.9 851.3 547.3 851.6C535.7 851.9 549 853 545.7 853.5C542.4 854 530.7 854.3 527.7 854.4M397.2 838.3C399.5 839 404.5 840.8 411.3 842.2C418 843.7 432.1 846 437.8 846.9C443.6 847.8 434.5 847.6 445.7 847.7C456.9 847.8 491.4 847.5 505.1 847.2C518.7 847 523.9 846.3 527.7 846.1M658.3 838.3C655.9 839 651 840.8 644.2 842.2C637.4 843.7 623.3 846 617.6 846.9C611.9 847.8 621 847.6 609.8 847.7C598.6 847.8 564.1 847.5 550.4 847.2C536.7 847 531.5 846.3 527.7 846.1M441 845.4L527.7 844.6M614.5 845.4L527.7 844.6M405.8 767.2C405.4 768 403.8 769.5 403.4 771.9C403.1 774.2 403.1 778.7 403.8 781.3C404.4 783.9 405.3 785.8 407.4 787.5C409.4 789.2 412.7 790.6 416 791.4C419.2 792.2 423.2 792.6 426.9 792.2C430.5 791.8 434.5 790.5 437.8 789.1C441.2 787.6 444.9 785.3 447.2 783.6C449.6 781.9 451.6 780.2 451.9 778.9C452.2 777.6 454 777.2 448.8 775.8C443.6 774.4 427.4 771.7 420.6 770.3C413.9 768.9 410.2 768 408.1 767.5zM649.7 767.2C650 768 651.7 769.5 652 771.9C652.3 774.2 652.3 778.7 651.7 781.3C651 783.9 650.1 785.8 648.1 787.5C646.1 789.2 642.8 790.6 639.5 791.4C636.2 792.2 632.2 792.6 628.6 792.2C624.9 791.8 621 790.5 617.6 789.1C614.2 787.6 610.6 785.3 608.2 783.6C605.9 781.9 603.8 780.2 603.5 778.9C603.3 777.6 601.5 777.2 606.7 775.8C611.9 774.4 628 771.7 634.8 770.3C641.6 768.9 645.2 768 647.3 767.5zM408.1 768.8C408 770.3 407 775.5 407.4 778.1C407.7 780.7 408.8 783 410.5 784.4C412.2 785.8 416.3 786.3 417.5 786.7L417.5 770.3M647.3 768.8C647.4 770.3 648.5 775.5 648.1 778.1C647.7 780.7 646.7 783 645 784.4C643.3 785.8 639.1 786.3 637.9 786.7L637.9 770.3M419.1 771.1C419.1 773.4 418.3 782.5 419.1 785.2C419.9 787.9 422.2 787.2 423.8 787.2C425.4 787.2 427.9 785.5 428.8 785.2L429.2 772.7M636.4 771.1C636.4 773.4 637.2 782.5 636.4 785.2C635.6 787.9 633.3 787.2 631.7 787.2C630.1 787.2 627.5 785.5 626.7 785.2L626.2 772.7M430.8 773.4C430.9 775.3 430.5 782.7 431.3 784.7C432.1 786.7 434 785.9 435.5 785.6C437 785.4 439.4 783.6 440.2 783.1L440.7 775M624.6 773.4C624.6 775.3 625 782.7 624.2 784.7C623.4 786.7 621.4 785.9 620 785.6C618.5 785.4 616 783.6 615.3 783.1L614.8 775M413.6 762.5C414.8 761.2 415.8 755.6 420.6 754.7C425.5 753.8 436.5 756.3 442.5 757C448.5 757.8 453.7 758.6 456.6 759.4C459.5 760.2 462.1 761.5 459.7 761.7C457.4 761.9 448.8 761.2 442.5 760.6C436.3 760 426.8 757.7 422.2 758.1C417.6 758.6 416.3 762.4 415.2 763.3M641.8 762.5C640.7 761.2 639.6 755.6 634.8 754.7C630 753.8 618.9 756.3 612.9 757C606.9 757.8 601.7 758.6 598.9 759.4C596 760.2 593.4 761.5 595.7 761.7C598.1 761.9 606.7 761.2 612.9 760.6C619.2 760 628.7 757.7 633.2 758.1C637.8 758.6 639.1 762.4 640.3 763.3M421.4 766.4C421.8 766.3 417.6 765.3 423.8 765.6C429.9 766 451.9 767.5 458.2 768.4C464.4 769.4 461.3 770.7 461.3 771.1C461.3 771.5 464.5 771.6 458.2 771.1C451.8 770.6 428.9 768.5 423 768zM634 766.4C633.6 766.3 637.8 765.3 631.7 765.6C625.6 766 603.5 767.5 597.3 768.4C591 769.4 594.2 770.7 594.2 771.1C594.2 771.5 590.9 771.6 597.3 771.1C603.7 770.6 626.6 768.5 632.5 768zM409.7 750C410.4 751 413.2 754.2 413.6 756.3C414 758.3 413.3 760.7 412 762.5C410.7 764.3 406.8 766.4 405.8 767.2M645.7 750C645.1 751 642.2 754.2 641.8 756.3C641.5 758.3 642.1 760.7 643.4 762.5C644.7 764.3 648.6 766.4 649.7 767.2M432.4 792.2C430.9 794.6 425.1 803.3 423.8 806.3C422.5 809.3 423.2 809.5 424.6 810.2C425.9 810.8 428.6 811.5 431.6 810.2C434.6 808.9 439.7 804.1 442.5 802.4C445.4 800.7 447.7 800.4 448.8 800M623.1 792.2C624.5 794.6 630.4 803.3 631.7 806.3C633 809.3 632.2 809.5 630.9 810.2C629.6 810.8 626.9 811.5 623.9 810.2C620.9 808.9 615.8 804.1 612.9 802.4C610.1 800.7 607.7 800.4 606.7 800M448 800C448.9 799.4 450.5 797 453.5 796.1C456.5 795.2 453.6 795.1 466 794.6C478.4 794 517.4 793.2 527.7 793M607.5 800C606.5 799.4 605 797 602 796.1C599 795.2 601.8 795.1 589.5 794.6C577.1 794 538 793.2 527.7 793M448 800C448.9 800.7 450.7 802.9 453.5 803.9C456.2 805 452 805.8 464.4 806.3C476.8 806.7 517.2 806.5 527.7 806.6M607.5 800C606.5 800.7 604.7 802.9 602 803.9C599.2 805 603.4 805.8 591 806.3C578.7 806.7 538.3 806.5 527.7 806.6M453.5 796.9L527.7 796.1M602 796.9L527.7 796.1M465.2 797.7L465.7 806.3M590.3 797.7L589.8 806.3M503.5 796.9L503.8 806.6M552 796.9L551.6 806.6M426.1 811.7C424.9 813.2 421.2 817.3 419.1 820.3C417 823.3 416.6 827.9 413.6 829.7C410.6 831.5 403.8 832.1 401.1 831.3C398.4 830.5 397.8 826.1 397.2 825M629.3 811.7C630.5 813.2 634.3 817.3 636.4 820.3C638.5 823.3 638.8 827.9 641.8 829.7C644.8 831.5 651.6 832.1 654.3 831.3C657.1 830.5 657.6 826.1 658.3 825M432.4 831.3C434.1 829.5 439.5 823.5 442.5 820.3C445.5 817.2 447.2 814.6 450.3 812.5C453.5 810.5 452.7 808.9 461.3 808.2C469.9 807.4 494.6 807.9 501.9 808.2C509.2 808.4 500.8 809.4 505.1 809.7C509.4 810.1 523.9 810.1 527.7 810.2M623.1 831.3C621.4 829.5 615.9 823.5 612.9 820.3C609.9 817.2 608.2 814.6 605.1 812.5C602 810.5 602.8 808.9 594.2 808.2C585.6 807.4 560.8 807.9 553.5 808.2C546.2 808.4 554.7 809.4 550.4 809.7C546.1 810.1 531.5 810.1 527.7 810.2M432.4 831.3C432.6 832.3 433.1 835.2 433.9 837.5C434.7 839.9 435.9 843.9 437.1 845.4C438.2 846.8 440.3 846 441 846.1M623.1 831.3C622.8 832.3 622.3 835.2 621.5 837.5C620.7 839.9 619.6 843.9 618.4 845.4C617.2 846.8 615.1 846 614.5 846.1M437.8 831.3C438.1 830.5 438.1 828.3 439.4 826.6C440.7 824.9 443.3 823.1 445.7 821.1C448 819.2 450.6 816.6 453.5 814.9C456.3 813.2 457.1 811.7 462.9 811C468.6 810.3 483.7 810.7 487.9 810.7M617.6 831.3C617.4 830.5 617.4 828.3 616 826.6C614.7 824.9 612.1 823.1 609.8 821.1C607.5 819.2 604.8 816.6 602 814.9C599.1 813.2 598.3 811.7 592.6 811C586.9 810.3 571.8 810.7 567.6 810.7M437.8 831.3C438 832.6 438.1 836.8 438.6 839.1C439.1 841.4 435.4 844.1 441 845C446.6 846 467 845 472.2 845M617.6 831.3C617.5 832.6 617.4 836.8 616.8 839.1C616.3 841.4 620.1 844.1 614.5 845C608.9 846 588.4 845 583.2 845M444.1 822.7L487.9 822.7M611.4 822.7L567.6 822.7M487.9 810.7L527.7 810.7M567.6 810.7L527.7 810.7M487.9 810.7L487.9 831L527.7 831M567.6 810.7L567.6 831L527.7 831M527.7 810.7L527.7 831M472.2 824.3L487.9 824.3M583.2 824.3L567.6 824.3M472.2 824.3L472.2 845.4L527.7 845.4M583.2 824.3L583.2 845.4L527.7 845.4M425.3 822.7L434.7 823.2L432.4 826.6L423 826.1zM630.1 822.7L620.7 823.2L623.1 826.6L632.5 826.1zM419.9 828.2L432.4 828.9L430 832.5L417.5 831.8zM635.6 828.2L623.1 828.9L625.4 832.5L637.9 831.8zM421.4 835.2L430 835.7L426.9 839.9L418.8 838.8zM634 835.2L625.4 835.7L628.6 839.9L636.7 838.8zM397.2 838.8C402.9 839.9 424.9 843.9 431.6 845.4C438.2 846.8 436.1 847.3 437.1 847.7M658.3 838.8C652.5 839.9 630.5 843.9 623.9 845.4C617.2 846.8 619.3 847.3 618.4 847.7M527.7 757.8L477.7 757.8L480 762.5L462.9 763L469.9 770.3L527.7 770.3M527.7 757.8L577.7 757.8L575.4 762.5L592.6 763L585.6 770.3L527.7 770.3M469.9 770.3L473.8 778.9L527.7 778.9M585.6 770.3L581.7 778.9L527.7 778.9M421.4 766.4C427.5 767.2 451.5 769.9 458.2 771.1C464.8 772.3 449.7 773.1 461.3 773.4C472.9 773.8 516.7 773.4 527.7 773.4M634 766.4C627.9 767.2 603.9 769.9 597.3 771.1C590.6 772.3 605.8 773.1 594.2 773.4C582.6 773.8 538.8 773.4 527.7 773.4" stroke="#f0f0f0" stroke-width="1.15" fill="none" stroke-linejoin="round" stroke-linecap="round"/>
<defs><pattern id="mesh1" width="3" height="3" patternUnits="userSpaceOnUse"><path d="M0 0l3 3M3 0l-3 3" stroke="#e0e0e0" stroke-width=".55"/></pattern><pattern id="mesh2" width="10.2" height="10.2" patternUnits="userSpaceOnUse" x="472.3" y="824.3"><path d="M0 0l10.2 10.2M10.2 0l-10.2 10.2" stroke="#eaeaea" stroke-width=".9"/></pattern></defs>
<path d="M477.7 757.8L577.7 757.8L575.4 762.5L592.6 763L585.6 770.3L469.9 770.3L462.9 763L480 762.5z" fill="url(#mesh1)" stroke="none"/>
<path d="M472.2 824.3H583.2V845.4H472.2zM487.9 824.3V831H567.6V824.3z" fill="url(#mesh2)" fill-rule="evenodd" stroke="none"/>
</g>
<g id="car-rear">
<path d="M947.3 637.5C947.9 636.7 950.1 634.4 951.2 632.8C952.2 631.3 953.1 628.9 953.5 628.1M959.8 637.5C959.1 636.7 956.9 634.4 955.9 632.8C954.8 631.3 953.9 628.9 953.5 628.1M953.5 637.8C947 638 926.2 638.5 914.4 639.1C902.7 639.7 891 640.6 883.2 641.4C875.3 642.2 871.2 642.3 867.5 643.8C863.9 645.2 862.3 649 861.3 650M953.5 637.8C960 638 980.9 638.5 992.6 639.1C1004.3 639.7 1016 640.6 1023.9 641.4C1031.7 642.2 1035.8 642.3 1039.5 643.8C1043.1 645.2 1044.7 649 1045.7 650M872.2 642.2C872.6 641.5 873.5 639.1 874.6 638.3C875.6 637.5 877.4 637.2 878.5 637.2C879.5 637.2 880.2 637.6 880.8 638.3C881.4 639 881.7 640.9 881.9 641.4M1034.8 642.2C1034.4 641.5 1033.5 639.1 1032.5 638.3C1031.4 637.5 1029.6 637.2 1028.5 637.2C1027.5 637.2 1026.8 637.6 1026.2 638.3C1025.6 639 1025.3 640.9 1025.1 641.4M953.5 641.9C947 642.1 926.2 642.4 914.4 643C902.7 643.6 890.5 644.4 883.2 645.3C875.9 646.2 874.2 647.5 870.7 648.4C867.1 649.4 863.5 650.4 862.1 650.8M953.5 641.9C960 642.1 980.9 642.4 992.6 643C1004.3 643.6 1016.6 644.4 1023.9 645.3C1031.1 646.2 1032.8 647.5 1036.4 648.4C1039.9 649.4 1043.5 650.4 1045 650.8M953.5 652.8C944.4 652.9 912.3 652.8 898.8 653.1C885.2 653.5 877.2 654.8 872.2 654.7C867.3 654.6 869.5 653.4 869.1 652.4C868.7 651.3 867.5 649.5 869.9 648.4C872.2 647.4 880.9 646.5 883.2 646.1M953.5 652.8C962.6 652.9 994.7 652.8 1008.2 653.1C1021.8 653.5 1029.8 654.8 1034.8 654.7C1039.7 654.6 1037.5 653.4 1037.9 652.4C1038.3 651.3 1039.5 649.5 1037.1 648.4C1034.8 647.4 1026.1 646.5 1023.9 646.1M953.5 645L930.1 645L934.7 651.9L953.5 651.9M953.5 645L977 645L972.3 651.9L953.5 651.9M934 646.1L937.1 651.3L953.5 651.3M973 646.1L969.9 651.3L953.5 651.3M861.3 650C860.2 652.6 857.4 659.4 855 665.6C852.7 671.9 849.6 681.3 847.2 687.5C844.9 693.8 843 699.3 841 703.2C838.9 707.1 836.9 708.6 834.7 711C832.5 713.3 828.8 716.2 827.7 717.2M1045.7 650C1046.8 652.6 1049.6 659.4 1052 665.6C1054.3 671.9 1057.5 681.3 1059.8 687.5C1062.2 693.8 1064 699.3 1066.1 703.2C1068.1 707.1 1070.1 708.6 1072.3 711C1074.5 713.3 1078.2 716.2 1079.3 717.2M863.6 651.6C862.6 654.2 859.5 661.7 857.4 667.2C855.3 672.7 852.4 680.5 851.1 684.4C849.8 688.3 849.4 688.6 849.6 690.7C849.7 692.7 850.5 695.1 851.9 696.9C853.3 698.7 854.5 700.3 858.1 701.6C861.8 702.8 864.4 703.8 873.8 704.4C883.2 705.1 901.1 705.2 914.4 705.5C927.7 705.8 947 705.9 953.5 706M1043.4 651.6C1044.4 654.2 1047.6 661.7 1049.6 667.2C1051.7 672.7 1054.6 680.5 1055.9 684.4C1057.2 688.3 1057.6 688.6 1057.5 690.7C1057.3 692.7 1056.6 695.1 1055.1 696.9C1053.7 698.7 1052.5 700.3 1048.9 701.6C1045.2 702.8 1042.6 703.8 1033.2 704.4C1023.9 705.1 1005.9 705.2 992.6 705.5C979.3 705.8 960 705.9 953.5 706M861.3 653.1C860.8 656.3 858.9 666.7 858.1 671.9C857.4 677.1 857.4 680.8 856.6 684.4C855.8 688.1 854 692.2 853.5 693.8M1045.7 653.1C1046.3 656.3 1048.1 666.7 1048.9 671.9C1049.6 677.1 1049.6 680.8 1050.4 684.4C1051.2 688.1 1053 692.2 1053.6 693.8M953.5 653.5C944.4 653.5 910 653 898.8 653.5C887.6 653.9 890.2 654.2 886.3 656.3C882.4 658.3 877.8 662.3 875.3 665.6C872.9 669 872 672.9 871.4 676.6C870.9 680.2 871 684.4 872.2 687.5C873.4 690.7 875.3 693.3 878.5 695.3C881.6 697.4 878.5 698.7 891 699.7C903.5 700.7 943.1 701 953.5 701.3M953.5 653.5C962.6 653.5 997 653 1008.2 653.5C1019.4 653.9 1016.8 654.2 1020.7 656.3C1024.6 658.3 1029.2 662.3 1031.7 665.6C1034.1 669 1035.1 672.9 1035.6 676.6C1036.1 680.2 1036 684.4 1034.8 687.5C1033.6 690.7 1031.7 693.3 1028.5 695.3C1025.4 697.4 1028.5 698.7 1016 699.7C1003.5 700.7 963.9 701 953.5 701.3M827.7 717.2C828.3 716.7 829.9 715.1 831.6 714.1C833.3 713.1 829.2 711.9 837.8 711.3C846.4 710.7 863.9 710.8 883.2 710.7C902.4 710.6 941.8 710.7 953.5 710.7M1079.3 717.2C1078.7 716.7 1077.1 715.1 1075.4 714.1C1073.7 713.1 1077.8 711.9 1069.2 711.3C1060.6 710.7 1043.1 710.8 1023.9 710.7C1004.6 710.6 965.2 710.7 953.5 710.7M828.4 718.8C829.1 718.3 823.2 716.4 832.4 715.7C841.5 714.9 863 714.7 883.2 714.4C903.4 714.1 941.8 713.9 953.5 713.8M1078.6 718.8C1077.9 718.3 1083.8 716.4 1074.7 715.7C1065.5 714.9 1044 714.7 1023.9 714.4C1003.7 714.1 965.2 713.9 953.5 713.8M883.9 714.9C884.6 715.3 876.3 717 887.9 717.2C899.4 717.5 942.6 716.6 953.5 716.4M1023.1 714.9C1022.4 715.3 1030.8 717 1019.2 717.2C1007.6 717.5 964.4 716.6 953.5 716.4M830 718.8L833.1 715.4L867.5 715.4L871.4 717.2L856.6 725L857.4 727.4L883.2 716.4M1077 718.8L1073.9 715.4L1039.5 715.4L1035.6 717.2L1050.4 725L1049.6 727.4L1023.9 716.4M831.6 725C832 723.8 827.5 718.8 833.9 717.5C840.3 716.3 866 716.5 869.9 717.5C873.8 718.6 860.4 722.9 857.4 723.8C854.4 724.7 853.3 722.5 851.9 722.7C850.5 722.9 849.3 724.7 848.8 725M1075.4 725C1075 723.8 1079.5 718.8 1073.1 717.5C1066.7 716.3 1041 716.5 1037.1 717.5C1033.2 718.6 1046.6 722.9 1049.6 723.8C1052.6 724.7 1053.7 722.5 1055.1 722.7C1056.6 722.9 1057.7 724.7 1058.2 725M835.5 718L832.7 724.3M1071.5 718L1074.3 724.3M838.9 718L836.1 724.3M1068.1 718L1070.9 724.3M842.4 718L839.5 724.3M1064.7 718L1067.5 724.3M845.8 718L843 724.3M1061.2 718L1064 724.3M849.2 718L846.4 724.3M1057.8 718L1060.6 724.3M852.7 718L849.9 724.3M1054.3 718L1057.1 724.3M856.1 718L853.3 724.3M1050.9 718L1053.7 724.3M859.6 718L856.7 724.3M1047.5 718L1050.3 724.3M863 718L860.2 724.3M1044 718L1046.8 724.3M866.4 718L863.6 724.3M1040.6 718L1043.4 724.3M832.4 726.6L845.6 730.5L846 748.5C844.7 748 840.7 747.2 838.6 745.4C836.5 743.5 834.1 738.9 833.1 737.6zM1074.7 726.6L1061.4 730.5L1061.1 748.5C1062.3 748 1066.3 747.2 1068.4 745.4C1070.5 743.5 1073 738.9 1073.9 737.6zM834.7 732.9L844.1 732.9M1072.3 732.9L1062.9 732.9M835.5 736L844.1 736M1071.5 736L1062.9 736M837 739.1L844.1 739.1M1070 739.1L1062.9 739.1M828.4 725C828.7 727.1 828.7 733.9 830 737.6C831.3 741.2 832.9 744.5 836.3 746.9C839.7 749.4 848 751.5 850.3 752.4M1078.6 725C1078.3 727.1 1078.3 733.9 1077 737.6C1075.7 741.2 1074.1 744.5 1070.7 746.9C1067.4 749.4 1059 751.5 1056.7 752.4M856.6 727.4L851.1 732.9C851 736.3 850.3 747.7 850.3 753.2C850.3 758.7 850.6 760.6 851.1 765.7C851.6 770.8 853.1 780.9 853.5 784M1050.4 727.4L1055.9 732.9C1056 736.3 1056.7 747.7 1056.7 753.2C1056.7 758.7 1056.4 760.6 1055.9 765.7C1055.4 770.8 1053.9 780.9 1053.6 784M851.1 734.4L953.5 734.9M1055.9 734.4L953.5 734.9M827.7 717.2C827.5 718.8 826.8 721.1 826.9 726.6C827 732.1 828.3 743.9 828.4 750.1C828.6 756.2 827.8 761.1 827.7 763.3C831.4 763.2 829.4 762.8 850.3 762.6C871.3 762.3 936.3 761.9 953.5 761.8M1079.3 717.2C1079.5 718.8 1080.3 721.1 1080.1 726.6C1080 732.1 1078.7 743.9 1078.6 750.1C1078.4 756.2 1079.2 761.1 1079.3 763.3C1075.6 763.2 1077.7 762.8 1056.7 762.6C1035.7 762.3 970.7 761.9 953.5 761.8M851.1 767.6L953.5 767.3M1055.9 767.6L953.5 767.3M829.2 728.2C828.3 730.8 825.3 738.6 823.8 743.8C822.2 749 820.9 754.2 819.9 759.4C818.8 764.6 817.9 771 817.5 775.1C817.1 779.2 817.2 782.5 817.2 784M1077.8 728.2C1078.7 730.8 1081.7 738.6 1083.3 743.8C1084.8 749 1086.1 754.2 1087.2 759.4C1088.2 764.6 1089.1 771 1089.5 775.1C1090 779.2 1089.8 782.5 1089.8 784" stroke="#f0f0f0" stroke-width="1.15" fill="none" stroke-linejoin="round" stroke-linecap="round"/>
<path d="M817.2 783.6C817.2 785.8 817 790.8 817.2 796.9C817.4 803 817.8 814.4 818.3 820.3C818.7 826.3 819.2 828.2 819.9 832.9C820.5 837.5 821.8 845.9 822.2 848.5L847.2 849.3C848.2 848.4 850.1 846 853.5 843.8C856.8 841.6 861.5 839.1 867.5 836C873.5 832.9 875.1 827.1 889.4 825C903.7 823 942.8 823.7 953.5 823.5M1089.8 783.6C1089.8 785.8 1090 790.8 1089.8 796.9C1089.6 803 1089.2 814.4 1088.7 820.3C1088.3 826.3 1087.8 828.2 1087.2 832.9C1086.5 837.5 1085.2 845.9 1084.8 848.5L1059.8 849.3C1058.8 848.4 1056.9 846 1053.6 843.8C1050.2 841.6 1045.5 839.1 1039.5 836C1033.5 832.9 1031.9 827.1 1017.6 825C1003.3 823 964.2 823.7 953.5 823.5M818.8 825C818.9 830.8 819.3 851.1 819.9 859.4C820.4 867.8 821.2 870.6 822.2 875.1C823.2 879.5 825.5 884.2 826.1 886L848 886C848.6 884.2 850.9 879.5 851.9 875.1C852.9 870.6 853.9 864.4 854.2 859.4C854.6 854.5 854.2 847.7 854.2 845.4M1088.3 825C1088.1 830.8 1087.7 851.1 1087.2 859.4C1086.6 867.8 1085.9 870.6 1084.8 875.1C1083.8 879.5 1081.6 884.2 1080.9 886L1059 886C1058.4 884.2 1056.2 879.5 1055.1 875.1C1054.1 870.6 1053.2 864.4 1052.8 859.4C1052.4 854.5 1052.8 847.7 1052.8 845.4M824.5 850L826.9 886M1082.5 850L1080.1 886M829.2 850L832.4 886M1077.8 850L1074.7 886M833.9 850L837 886M1073.1 850L1070 886M838.6 850L841.7 886M1068.4 850L1065.3 886M844.1 850L846.4 886M1062.9 850L1060.6 886M851.6 767.2L855 790.6M1055.4 767.2L1052 790.6M913.3 772.2L953.5 772.2M993.7 772.2L953.5 772.2M913.3 793.5L953.5 793.5M993.7 793.5L953.5 793.5M913.3 772.2C913 772.3 911.7 772.5 911.3 773C910.9 773.4 911 772.1 911 775C910.9 778 910.9 787.7 911 790.6C911.1 793.6 911.2 792.4 911.6 792.8C912 793.3 913 793.4 913.3 793.5M993.7 772.2C994 772.3 995.3 772.5 995.7 773C996.1 773.4 996 772.1 996 775C996.1 778 996.1 787.7 996 790.6C995.9 793.6 995.8 792.4 995.4 792.8C995 793.3 994 793.4 993.7 793.5M830 791C834.2 791 848 791 855 791.4C862.1 791.9 866.5 792.4 872.2 793.8C878 795.2 875.9 798.8 889.4 799.7C903 800.6 942.8 799.5 953.5 799.4M1077 791C1072.8 791 1059 791 1052 791.4C1045 791.9 1040.5 792.4 1034.8 793.8C1029.1 795.2 1031.1 798.8 1017.6 799.7C1004.1 800.6 964.2 799.5 953.5 799.4M831.6 795.6C837.6 795.6 859.7 795 867.5 795.6C875.3 796.2 876.3 798.3 878.5 799.2C880.7 800.2 880.9 800.5 880.8 801.6C880.7 802.6 874.2 805.4 877.7 805.5C881.2 805.6 889.3 803 901.9 802.4C914.6 801.8 944.9 802 953.5 801.9M1075.4 795.6C1069.4 795.6 1047.3 795 1039.5 795.6C1031.7 796.2 1030.8 798.3 1028.5 799.2C1026.3 800.2 1026.1 800.5 1026.2 801.6C1026.3 802.6 1032.8 805.4 1029.3 805.5C1025.8 805.6 1017.7 803 1005.1 802.4C992.5 801.8 962.1 802 953.5 801.9M830.8 801.6L876.1 801.6L876.9 806.3L830.8 806.3M1076.2 801.6L1030.9 801.6L1030.1 806.3L1076.2 806.3M830 791C829.1 792.2 826 793.8 824.5 798.5C823.1 803.1 821 812.7 821.4 818.8C821.8 824.9 826 832.5 826.9 835.2C832.9 835.2 854.8 836.1 862.8 835.2C870.9 834.3 870.9 831.4 875.3 829.7C879.8 828 887.1 825.8 889.4 825M1077 791C1077.9 792.2 1081 793.8 1082.5 798.5C1083.9 803.1 1086 812.7 1085.6 818.8C1085.2 824.9 1081 832.5 1080.1 835.2C1074.1 835.2 1052.3 836.1 1044.2 835.2C1036.1 834.3 1036.1 831.4 1031.7 829.7C1027.2 828 1019.9 825.8 1017.6 825M832.4 795.6C831.6 796.9 828.7 799.3 827.7 803.1C826.6 807 825.7 814.2 826.1 818.8C826.5 823.3 829.4 828.6 830 830.5C835.5 830.5 854.8 831.7 862.8 830.5C870.9 829.3 873.8 825.6 878.5 823.5C883.2 821.3 878.5 818.7 891 817.5C903.5 816.4 943.1 816.6 953.5 816.4M1074.7 795.6C1075.4 796.9 1078.3 799.3 1079.3 803.1C1080.4 807 1081.3 814.2 1080.9 818.8C1080.5 823.3 1077.7 828.6 1077 830.5C1071.5 830.5 1052.3 831.7 1044.2 830.5C1036.1 829.3 1033.2 825.6 1028.5 823.5C1023.9 821.3 1028.5 818.7 1016 817.5C1003.5 816.4 963.9 816.6 953.5 816.4M876.9 807.1L838.1 813.8L953.5 814.1M1030.1 807.1L1068.9 813.8L953.5 814.1M888.6 828.2L953.5 827.4M1018.4 828.2L953.5 827.4M887.9 832.1L953.5 831.6M1019.2 832.1L953.5 831.6M891 835.7L953.5 835.4M1016 835.7L953.5 835.4M873.8 834.4C874.8 834.5 879.3 834.7 880 835.2C880.8 835.7 879.4 836.9 878.5 837.5C877.6 838.2 875.1 838.3 874.6 839.1C874 839.9 873.4 842.2 875.3 842.2C877.3 842.3 873.3 839.8 886.3 839.4C899.3 839 942.3 839.8 953.5 839.9M1033.2 834.4C1032.2 834.5 1027.8 834.7 1027 835.2C1026.2 835.7 1027.6 836.9 1028.5 837.5C1029.5 838.2 1031.9 838.3 1032.5 839.1C1033 839.9 1033.6 842.2 1031.7 842.2C1029.7 842.3 1033.8 839.8 1020.7 839.4C1007.7 839 964.7 839.8 953.5 839.9" stroke="#f0f0f0" stroke-width="1.15" fill="none" stroke-linejoin="round" stroke-linecap="round"/>
</g>
</svg>
<svg id="icons" width="1919" height="1018" viewBox="0 0 1919 1018">
<path d="M30.6 10.8h8l-4 4.5z" fill="#d0d0d0"/>
<path d="M60 5h14l6 6v9h-20z" fill="#dadada"/><path d="M74 5v6h6z" fill="#fafafa"/><path d="M73.6 5v6.4h6.4" fill="none" stroke="#222933" stroke-width=".9"/>
<path d="M90 20V5h7l2 2.5h7v4H94.5z" fill="#bdbdbd"/><path d="M90 20l4.5-9H110l-4.5 9z" fill="#dcdcdc" stroke="#222933" stroke-width=".7"/>
<rect x="120" y="3" width="20" height="20" fill="#a9a9a9"/><rect x="125" y="3" width="10" height="7.5" fill="#f0f0f0"/><rect x="124" y="17.5" width="11.5" height="5.5" fill="#f0f0f0"/><rect x="126" y="19" width="1.5" height="3" fill="#333"/>
<rect x="150" y="3" width="17" height="17" fill="#a9a9a9"/><rect x="154" y="3" width="9" height="6" fill="#f0f0f0"/><rect x="153" y="14.5" width="9" height="5.5" fill="#f0f0f0"/><rect x="154.5" y="16" width="1.5" height="2.5" fill="#333"/><path d="M160.5 23l1-3.8 6-6.2 2.6 2.6-6 6.2z" fill="#f0c25a" stroke="#222933" stroke-width=".6"/><path d="M166 14.6l1.5-1.6q1.2-.6 2.2.4t.4 2.2l-1.5 1.6z" fill="#e8575c"/>
<rect x="181.6" y="3.4" width="10.2" height="19" rx="1.2" fill="#686868" stroke="#bdbdbd" stroke-width="1.4"/><rect x="185.5" y="20.2" width="2.4" height="1" fill="#bdbdbd"/><path d="M189 22V14.5h3.5l1 1.2h4.5v1.3h-6.5z" fill="#d9a940"/><path d="M189 22l2-5.5h8l-2 5.5z" fill="#f6cc6a"/>
<rect x="216.8" y="3.4" width="10.2" height="19" rx="1.2" fill="#686868" stroke="#bdbdbd" stroke-width="1.4"/><rect x="220.7" y="20.2" width="2.4" height="1" fill="#bdbdbd"/><path d="M212 9.2h6.5V6.5l5 3.8-5 3.8v-2.7H212z" fill="#5bb5f2"/>
<rect x="243" y="2.5" width="13.5" height="6" fill="#f4f4f4"/><rect x="239.5" y="7.5" width="20.5" height="11" rx="1" fill="#e6e6e6"/><rect x="243" y="14.5" width="13.5" height="8.5" fill="#7cc6f7" stroke="#f4f4f4" stroke-width="1.2"/>
<path d="M270 12l9-7.5V9q9.5.3 11 10-3.5-4.8-11-4.6v5z" fill="#d2d2d2"/>
<path d="M299 10.8h6l-3 3.5z" fill="#c8c8c8"/>
<path d="M334.5 12l-9-7.5V9q-9.5.3-11 10 3.5-4.8 11-4.6v5z" fill="#6b717c"/>
<path d="M344 10.8h6l-3 3.5z" fill="#8a8f99"/>
<rect x="359.5" y="7.6" width="10.5" height="1.6" fill="#d0d0d0"/>
<path d="M359.6 11h10.5l-5.25 6z" fill="#d0d0d0"/>
<path d="M380 12.5L400 4l-4.5 17-6.3-4.2-2.7 4.4-.8-6.4z" fill="#5bb5f2"/><path d="M385.6 14.8L400 4l-10.8 12.8" fill="#222933" opacity=".55"/>
<rect x="751.7" y="43" width="19" height="8.7" rx="1" fill="#e4e4e4"/><path d="M759 48.6h4.5l-2.25-2.8z" fill="#333"/>
<path d="M776.3 45.8h6l-3 3.5z" fill="#d0d0d0"/>
<path d="M1203 8.5l5 4.5-5 4.5z" fill="#e0e0e0"/>
<circle cx="1452" cy="11" r="6" fill="#4a5261" stroke="#e0e0e0" stroke-width="1.6"/><path d="M1456.5 15.5l6 6" stroke="#c9a05a" stroke-width="2" stroke-linecap="round"/>
<circle cx="1484" cy="8.5" r="4.8" fill="#e0e0e0"/><path d="M1474.5 22q0-8.5 9.5-8.5t9.5 8.5z" fill="#e0e0e0"/>
<path d="M1607 10.8h6l-3 3.5z" fill="#d0d0d0"/>
<path d="M1628.5 5.8h2.5l3 9.7h8.5" fill="none" stroke="#d0d0d0" stroke-width="1.3"/><path d="M1632.2 8.5h11.6l-1.9 6h-7.8z" fill="#9c9c9c"/><circle cx="1635" cy="18.8" r="1.6" fill="#d0d0d0"/><circle cx="1641.5" cy="18.8" r="1.6" fill="#d0d0d0"/>
<path d="M1665.8 5.5l-7.3 13h14.6z" fill="none" stroke="#e0e0e0" stroke-width="2.2" stroke-linejoin="round"/><circle cx="1665.8" cy="5.3" r="2.6" fill="#e0e0e0"/><circle cx="1658.6" cy="18.5" r="2.6" fill="#e0e0e0"/><circle cx="1673" cy="18.5" r="2.6" fill="#e0e0e0"/>
<path d="M1683.5 10.8h6l-3 3.5z" fill="#d0d0d0"/>
<rect x="1702.3" y="2.5" width="1.2" height="21.5" fill="#43587a"/>
<circle cx="1724" cy="13" r="10" fill="#e2e2e2"/>
<path d="M1744.5 10.8h6l-3 3.5z" fill="#d0d0d0"/>
<rect x="1840" y="17" width="11" height="2.6" fill="#f0f0f0"/>
<path d="M1872 10V7h11v9h-3" fill="none" stroke="#f0f0f0" stroke-width="1.6"/><rect x="1868.8" y="10.3" width="10.4" height="8.6" fill="none" stroke="#f0f0f0" stroke-width="1.6"/>
<path d="M1900.5 7.5l13 12.5m0-12.5l-13 12.5" stroke="#f0f0f0" stroke-width="1.9"/>
<rect x="276.9" y="60.5" width="1.3" height="121" fill="#262c37"/>
<rect x="593.1" y="60.5" width="1.3" height="121" fill="#262c37"/>
<rect x="803.9" y="60.5" width="1.3" height="121" fill="#262c37"/>
<rect x="1145.4" y="60.5" width="1.3" height="121" fill="#262c37"/>
<rect x="1244.8" y="60.5" width="1.3" height="121" fill="#262c37"/>
<rect x="1522.1" y="60.5" width="1.3" height="121" fill="#262c37"/>
<rect x="1606.8" y="60.5" width="1.3" height="121" fill="#262c37"/>
<rect x="1727.8" y="60.5" width="1.3" height="121" fill="#262c37"/>
<rect x="1826.7" y="60.5" width="1.3" height="121" fill="#262c37"/>
<path d="M8.6 105.3L45.3 68.7" stroke="#d4d4d4" stroke-width="1.3"/>
<rect x="6.9" y="103.6" width="3.4" height="3.4" fill="#6cc0f5"/>
<rect x="43.6" y="67" width="3.4" height="3.4" fill="#6cc0f5"/>
<path d="M61.4 96.9H90A10 10 0 0 0 90 76.9H87.5" fill="none" stroke="#d4d4d4" stroke-width="1.3"/>
<rect x="59.7" y="95.2" width="3.4" height="3.4" fill="#6cc0f5"/>
<rect x="85.8" y="95.2" width="3.4" height="3.4" fill="#6cc0f5"/>
<rect x="85.8" y="75.2" width="3.4" height="3.4" fill="#6cc0f5"/>
<circle cx="140.6" cy="87" r="19.8" fill="none" stroke="#d4d4d4" stroke-width="1.3"/>
<path d="M140.6 87L151.5 76.5" stroke="#6cc0f5" stroke-width="1.3"/><path d="M154.2 74.2l-5.3 1.6 3.6 3.7z" fill="#6cc0f5"/>
<rect x="138.9" y="85.3" width="3.4" height="3.4" fill="#6cc0f5"/>
<path d="M181 104.5Q185 74 216 69.4" fill="none" stroke="#d4d4d4" stroke-width="1.3"/>
<rect x="179.3" y="102.8" width="3.4" height="3.4" fill="#6cc0f5"/>
<rect x="190.5" y="78.3" width="3.4" height="3.4" fill="#6cc0f5"/>
<rect x="214.3" y="67.7" width="3.4" height="3.4" fill="#6cc0f5"/>
<path d="M138 136.1h6l-3 3.5z" fill="#d0d0d0"/>
<path d="M195 136.1h6l-3 3.5z" fill="#d0d0d0"/>
<rect x="229" y="72.5" width="18" height="13" fill="none" stroke="#d4d4d4" stroke-width="1.3"/>
<rect x="227.5" y="71" width="3" height="3" fill="#6cc0f5"/>
<rect x="245.5" y="84" width="3" height="3" fill="#6cc0f5"/>
<path d="M258 77h6l-3 3.5z" fill="#d0d0d0"/>
<ellipse cx="237.5" cy="110.3" rx="9.5" ry="6.8" fill="none" stroke="#d4d4d4" stroke-width="1.3"/>
<rect x="236" y="102" width="3" height="3" fill="#6cc0f5"/>
<rect x="236" y="108.8" width="3" height="3" fill="#6cc0f5"/>
<rect x="245.5" y="108.8" width="3" height="3" fill="#6cc0f5"/>
<path d="M258 108h6l-3 3.5z" fill="#d0d0d0"/>
<rect x="231" y="134" width="13.6" height="13.6" fill="#30506e"/><path d="M231 141l7-7M231 147.6l13.6-13.6M237.5 147.6l7.1-7.1M231 144.3l10.3-10.3M234.2 147.6l10.4-10.4M241 147.6l3.6-3.6M231 137.5l3.5-3.5" stroke="#6cc0f5" stroke-width=".9"/><path d="M228.4 134H247.2M228.4 147.6H247.2M231 131.5V150.3M244.6 131.5V150.3" stroke="#8d929c" stroke-width="1.2"/>
<path d="M258 138.8h6l-3 3.5z" fill="#d0d0d0"/>
<path d="M155.5 170h9l-4.5 5z" fill="#d0d0d0"/>
<path d="M295 69.5l3.6 4.5h-2.6v4h4v-2.6l4.5 3.6-4.5 3.6v-2.6h-4v4h2.6l-3.6 4.5-3.6-4.5h2.6v-4h-4v2.6l-4.5-3.6 4.5-3.6v2.6h4v-4h-2.6z" fill="#f0f0f0"/>
<circle cx="289.5" cy="104.5" r="3.6" fill="none" stroke="#d4d4d4" stroke-width="1.2"/><path d="M296 103h5v6" fill="none" stroke="#d4d4d4" stroke-width="1.2"/><path d="M301 111l-2.4-3.2h4.8z" fill="#d4d4d4"/><circle cx="293.3" cy="115.5" r="3.8" fill="none" stroke="#6cc0f5" stroke-width="1.2"/><circle cx="300.5" cy="115.5" r="3.8" fill="none" stroke="#6cc0f5" stroke-width="1.2"/>
<path d="M293 146V131.5h-8V150h7" fill="none" stroke="#d4d4d4" stroke-width="1.2"/><path d="M297 131.5h4l4 18.5h-8" fill="none" stroke="#6cc0f5" stroke-width="1.2"/><path d="M290 146.5h6" stroke="#d4d4d4" stroke-width="1.2"/><path d="M298.5 146.5l-3-2.2v4.4z" fill="#d4d4d4"/>
<path d="M389 72.5A8.7 8.7 0 1 0 394.6 80" fill="none" stroke="#d4d4d4" stroke-width="1.3"/><path d="M387.5 69l5 3.6-5 3.2z" fill="#f0f0f0"/>
<path d="M384.8 103.5V118.5H377z" fill="none" stroke="#d4d4d4" stroke-width="1.1"/><path d="M387.3 103.5V118.5H395.2z" fill="none" stroke="#6cc0f5" stroke-width="1.1"/>
<path d="M376.5 139V131.8h19V150.5h-8" fill="none" stroke="#6cc0f5" stroke-width="1.2"/><rect x="376.5" y="140.5" width="10" height="10" fill="none" stroke="#d4d4d4" stroke-width="1.2"/>
<path d="M464.5 70.8h8" stroke="#5f87ad" stroke-width="1.2" stroke-dasharray="1.6 1"/><path d="M476 70.8h8.3" stroke="#8d929c" stroke-width="1.3"/><path d="M466.5 72.5l8 11.5M474.5 70v14" stroke="#f0f0f0" stroke-width="1.6"/><circle cx="473.3" cy="86.5" r="2" fill="none" stroke="#f0f0f0" stroke-width="1.2"/><circle cx="478.5" cy="84" r="2" fill="none" stroke="#f0f0f0" stroke-width="1.2"/>
<path d="M534 77h6l-3 3.5z" fill="#d0d0d0"/>
<path d="M464.3 120V112" stroke="#d4d4d4" stroke-width="1.2"/><path d="M475 100.5h9.3" stroke="#d4d4d4" stroke-width="1.2"/><path d="M464.3 112q0-11.5 10.7-11.5" fill="none" stroke="#6cc0f5" stroke-width="1.2"/>
<path d="M538 108h6l-3 3.5z" fill="#d0d0d0"/>
<rect x="465.5" y="133" width="6.8" height="6.2" fill="none" stroke="#8d929c" stroke-width="1.2"/>
<rect x="476.5" y="133" width="6.8" height="6.2" fill="none" stroke="#6cc0f5" stroke-width="1.2"/>
<rect x="465.5" y="143.5" width="6.8" height="6.2" fill="none" stroke="#6cc0f5" stroke-width="1.2"/>
<rect x="476.5" y="143.5" width="6.8" height="6.2" fill="none" stroke="#6cc0f5" stroke-width="1.2"/>
<path d="M536 138.8h6l-3 3.5z" fill="#d0d0d0"/>
<path d="M563.5 87.5l3-6 9.5-12.5 3 .5v6l-9.5 12.5z" fill="#f3c568"/><path d="M563.3 87.8l2.2-5q2.5-.4 4 .8t1.3 3.8l-4.5 2.2q-2.5.3-3-1.8z" fill="#ef5a62"/><path d="M559 88.6h3.5" stroke="#d4d4d4" stroke-width="1"/><path d="M569 88.6h10.5" stroke="#6cc0f5" stroke-width="1"/>
<path d="M559.5 106.5l4.5-4.5h15.5v12l-4.5 4.5" fill="none" stroke="#6cc0f5" stroke-width="1.2"/><path d="M575 106.5l4.5-4.5" stroke="#6cc0f5" stroke-width="1.2"/><rect x="559.5" y="106.5" width="15.5" height="12" fill="none" stroke="#d4d4d4" stroke-width="1.2"/>
<path d="M579.5 134.5H567a6.8 6.8 0 0 0 0 13.6h12.5" fill="none" stroke="#6cc0f5" stroke-width="1.2"/><path d="M579.5 138H568a3.3 3.3 0 0 0 0 6.6h11.5" fill="none" stroke="#6cc0f5" stroke-width="1.2"/>
<path d="M457.8 170h9l-4.5 5z" fill="#d0d0d0"/>
<path d="M620 136.2h6l-3 3.5z" fill="#d0d0d0"/>
<path d="M669.5 67V107M708.5 67V107" stroke="#d4d4d4" stroke-width="1.2"/><path d="M672 74.5H706" stroke="#d4d4d4" stroke-width="1.1"/><path d="M670.2 74.5l4.5-2.6v5.2zM707.8 74.5l-4.5-2.6v5.2z" fill="#d4d4d4"/>
<path d="M689 95.5L690.9 89.2L689 86L687.1 89.2z" fill="#f5c860"/>
<path d="M684.4 97.6L682.2 91.7L678.8 90.5L679.2 94z" fill="#f5c860"/>
<path d="M693.6 97.6L698.8 94L699.2 90.5L695.8 91.7z" fill="#f5c860"/>
<path d="M682.2 102L677.2 99L674.3 100.4L676.4 102.8z" fill="#f5c860"/>
<path d="M695.8 102L701.6 102.8L703.7 100.4L700.8 99z" fill="#f5c860"/>
<path d="M733.5 70V87M752.5 70V87" stroke="#d4d4d4" stroke-width="1.2"/><path d="M736 76H750" stroke="#6cc0f5" stroke-width="1.2"/><path d="M734.2 76l3.5-2v4zM751.8 76l-3.5-2v4z" fill="#6cc0f5"/>
<path d="M763 77h6l-3 3.5z" fill="#d0d0d0"/>
<circle cx="748.3" cy="106" r="3.2" fill="none" stroke="#d4d4d4" stroke-width="1.2"/><path d="M745.3 107.5l-3.8 1-5.5 7" fill="none" stroke="#d4d4d4" stroke-width="1.2"/><path d="M733.8 117.5l1.2-5 3.3 2.7z" fill="#d4d4d4"/>
<path d="M763 108h6l-3 3.5z" fill="#d0d0d0"/>
<rect x="734.2" y="133" width="17.6" height="15.3" fill="none" stroke="#d4d4d4" stroke-width="1.2"/><path d="M734.2 136.5h17.6M734.2 140.5h17.6M734.2 144.5h17.6M740 136.5V148.3M746 136.5V148.3" stroke="#d4d4d4" stroke-width="1.1"/>
<path d="M735.5 170h9l-4.5 5z" fill="#d0d0d0"/>
<path d="M836.2 82h22.1l-12 14.8h-22.1z" fill="#d0d0d0" stroke="#3b4453" stroke-width=".6"/>
<path d="M836.2 74.5h22.1l-12 14.8h-22.1z" fill="#d6d6d6" stroke="#3b4453" stroke-width=".6"/>
<path d="M836.2 67h22.1l-12 14.8h-22.1z" fill="#dcdcdc" stroke="#3b4453" stroke-width=".6"/>
<rect x="847" y="84" width="16.7" height="22.7" fill="#e9e9e9"/><rect x="849.3" y="86.6" width="11.1" height="8" fill="#6cc0f5"/><path d="M851 99.5h8M851 103h8" stroke="#777" stroke-width=".9"/><path d="M852 98.3v2.4M857.5 101.8v2.4" stroke="#777" stroke-width=".9"/>
<circle cx="896.5" cy="76.2" r="6.6" fill="#f5c860"/><path d="M893.5 83h6.2v2.8q-3.1 2.5-6.2 0z" fill="#f4f4f4"/>
<circle cx="920.3" cy="78.6" r="5.8" fill="#f5c860"/><path d="M920.3 69v3M920.3 85.2v3M910.7 78.6h3M926.9 78.6h3M913.5 71.8l2.1 2.1M925 83.3l2.1 2.1M913.5 85.4l2.1-2.1M925 73.9l2.1-2.1" stroke="#f5c860" stroke-width="1.1"/>
<rect x="936" y="78" width="14.3" height="9.8" fill="#f5c860"/><rect x="942.2" y="80.5" width="1.6" height="4.5" fill="#4d596d"/><path d="M945.6 78v-3.3a3.6 3.6 0 0 1 7.2 0v1.8" fill="none" stroke="#f5c860" stroke-width="1.8"/>
<rect x="961.8" y="70.6" width="17" height="17.2" fill="#fff" stroke="#000" stroke-width="1.2"/>
<path d="M1130.8 76.5h9l-4.5 5z" fill="#d0d0d0"/>
<path d="M890.9 101h12l-4.6 7h-12z" fill="#d6d6d6"/>
<circle cx="902" cy="113" r="3.9" fill="#4fc8d2"/><path d="M900 117.5h4l-2 2.6z" fill="#f4f4f4"/>
<path d="M920.6 108.8h12l-4.6 5.4h-12z" fill="#6cc0f5" stroke="#3b4453" stroke-width=".6"/>
<path d="M920.6 104.4h12l-4.6 5.4h-12z" fill="#d6d6d6" stroke="#3b4453" stroke-width=".6"/>
<path d="M920.6 100h12l-4.6 5.4h-12z" fill="#d6d6d6" stroke="#3b4453" stroke-width=".6"/>
<path d="M935 111.5l-6 6" stroke="#f0f0f0" stroke-width="1.2"/><path d="M926.8 119.5l1-4.5 3.5 3.5z" fill="#f0f0f0"/>
<path d="M950.6 101h12l-4.6 7h-12z" fill="#d6d6d6"/>
<path d="M959.6 109.5v8.2M956 111.5l7.2 4.2M963.2 111.5l-7.2 4.2" stroke="#4fc8d2" stroke-width="1.1"/><circle cx="959.6" cy="113.6" r="2.3" fill="none" stroke="#4fc8d2" stroke-width=".8"/>
<path d="M980.6 101h12l-4.6 7h-12z" fill="#d6d6d6"/>
<rect x="986.8" y="114" width="9.6" height="6.2" fill="#4fc8d2"/><path d="M988.8 114v-2.5a2.8 2.8 0 0 1 5.6 0v2.5" fill="none" stroke="#4fc8d2" stroke-width="1.3"/><rect x="991.1" y="115.5" width="1.1" height="3" fill="#3b4453"/>
<path d="M1010.6 114h12l-4.6 5.6h-12z" fill="#d6d6d6" stroke="#3b4453" stroke-width=".6"/>
<path d="M1010.6 109.3h12l-4.6 5.6h-12z" fill="#d6d6d6" stroke="#3b4453" stroke-width=".6"/>
<path d="M1010.6 104h12l-4.6 6h-12z" fill="#6cc0f5" stroke="#3b4453" stroke-width=".6"/>
<circle cx="1016" cy="103.5" r="3.8" fill="#d6d6d6"/>
<path d="M890.6 139.8h12l-4.6 5.4h-12z" fill="#d6d6d6" stroke="#3b4453" stroke-width=".6"/>
<path d="M890.6 135.4h12l-4.6 5.4h-12z" fill="#d6d6d6" stroke="#3b4453" stroke-width=".6"/>
<path d="M890.6 131h12l-4.6 5.4h-12z" fill="#d6d6d6" stroke="#3b4453" stroke-width=".6"/>
<circle cx="902" cy="144" r="3.9" fill="#f5c860"/><path d="M900 148.5h4l-2 2.6z" fill="#f4f4f4"/>
<path d="M920.6 139.8h12l-4.6 5.4h-12z" fill="#6cc0f5" stroke="#3b4453" stroke-width=".6"/>
<path d="M920.6 135.4h12l-4.6 5.4h-12z" fill="#d6d6d6" stroke="#3b4453" stroke-width=".6"/>
<path d="M920.6 131h12l-4.6 5.4h-12z" fill="#d6d6d6" stroke="#3b4453" stroke-width=".6"/>
<path d="M927.5 150l6-6" stroke="#f0f0f0" stroke-width="1.2"/><path d="M935.2 142.3l-1 4.5-3.5-3.5z" fill="#f0f0f0"/>
<path d="M950.6 139.8h12l-4.6 5.4h-12z" fill="#d6d6d6" stroke="#3b4453" stroke-width=".6"/>
<path d="M950.6 135.4h12l-4.6 5.4h-12z" fill="#d6d6d6" stroke="#3b4453" stroke-width=".6"/>
<path d="M950.6 131h12l-4.6 5.4h-12z" fill="#d6d6d6" stroke="#3b4453" stroke-width=".6"/>
<circle cx="960" cy="145" r="3" fill="#f5c860"/><circle cx="960" cy="145" r="5.3" fill="none" stroke="#f5c860" stroke-width="1.5" stroke-dasharray="1.5 2.66"/>
<path d="M980.6 132h12l-4.6 7h-12z" fill="#d6d6d6"/>
<rect x="984" y="144.3" width="9.6" height="6.2" fill="#f5c860"/><path d="M990.3 144.3v-2.5a2.7 2.7 0 0 1 5.4 0v1.2" fill="none" stroke="#f5c860" stroke-width="1.3"/><rect x="988.3" y="145.8" width="1.1" height="3" fill="#3b4453"/>
<path d="M1010.6 139.8h12l-4.6 5.4h-12z" fill="#d6d6d6" stroke="#3b4453" stroke-width=".6"/>
<path d="M1010.6 135.4h12l-4.6 5.4h-12z" fill="#d6d6d6" stroke="#3b4453" stroke-width=".6"/>
<path d="M1010.6 131h12l-4.6 5.4h-12z" fill="#d6d6d6" stroke="#3b4453" stroke-width=".6"/>
<path d="M1016.5 145.5l3-3 6.5 6.5-3 3z" fill="#f5c860"/><path d="M1019 141.5l3-3 1.2 1.2 1.8-1.8 2 2-1.8 1.8 1.3 1.3-3 3z" fill="#f4f4f4"/>
<path d="M994.5 170h9l-4.5 5z" fill="#d0d0d0"/>
<path d="M1171 65h14l7.4 7.4V102.5H1171z" fill="#7cc6f7"/><path d="M1185 65v7.4h7.4z" fill="#b7e0fb"/><rect x="1153.5" y="79" width="25" height="20.5" fill="#6d7380" stroke="#9aa0aa" stroke-width="1.2"/><circle cx="1178.5" cy="96.5" r="8.3" fill="#6d7380" fill-opacity=".85" stroke="#b0b5bd" stroke-width="1.2"/><rect x="1152" y="97.5" width="3" height="3" fill="#e4e4e4"/>
<path d="M1169 134.2h6l-3 3.5z" fill="#d0d0d0"/>
<rect x="1202.5" y="76.5" width="11.5" height="9" fill="#6d7380" stroke="#a5aab3" stroke-width="1"/><circle cx="1214.5" cy="85" r="3.3" fill="#6d7380" stroke="#b0b5bd" stroke-width="1"/><rect x="1201" y="84.5" width="2" height="2" fill="#e4e4e4"/>
<rect x="1202.5" y="107" width="11.5" height="9" fill="#6d7380" stroke="#a5aab3" stroke-width="1"/><circle cx="1214.5" cy="115.5" r="3.3" fill="#6d7380" stroke="#b0b5bd" stroke-width="1"/><rect x="1201" y="115" width="2" height="2" fill="#e4e4e4"/>
<path d="M1216 69.5l1.2 3.3 3.2-1.5-1.5 3.2 3.3 1.2-3.3 1.2 1.5 3.2-3.2-1.5-1.2 3.3-1.2-3.3-3.2 1.5 1.5-3.2-3.3-1.2 3.3-1.2-1.5-3.2 3.2 1.5z" fill="#f5c860"/>
<path d="M1211.5 110.5l.8-3 5.8-6 2.2 2.2-5.8 6z" fill="#f5c860"/><path d="M1217.3 102.3l1.3-1.3q1-.5 1.9.3t.3 1.9l-1.3 1.3z" fill="#ef5a62"/>
<path d="M1201.5 134.5h8l8 8-7 7.5-9-9z" fill="#dadada"/><circle cx="1204.5" cy="137.5" r="1.2" fill="#3b4453"/><path d="M1205 141.5l5 4.5M1208 139l4.5 4" stroke="#666" stroke-width=".8" stroke-dasharray="1.5 1"/><path d="M1210.5 141.5l.8-3 5.8-6 2.2 2.2-5.8 6z" fill="#f5c860"/><path d="M1216.3 133.3l1.3-1.3q1-.5 1.9.3t.3 1.9l-1.3 1.3z" fill="#ef5a62"/>
<path d="M1231 138.8h6l-3 3.5z" fill="#d0d0d0"/>
<path d="M1212.5 170h9l-4.5 5z" fill="#d0d0d0"/>
<rect x="1266.5" y="68" width="25.5" height="34.5" fill="#dedede"/><rect x="1269.5" y="71" width="17" height="12.5" fill="#6cc0f5"/><path d="M1271 90.5h14M1271 96.5h14" stroke="#666" stroke-width=".9"/><path d="M1274 88.8v3.4M1282 94.8v3.4" stroke="#666" stroke-width="1.2"/><path d="M1285.5 96.5l7.5-6.5 8 9.5-7.5 6.5z" fill="#f5c860"/><path d="M1293 90l4.5-3.8 1.2-3.2 2.5 2.8 3-.8 1.5 4.5-4.7 10z" fill="#f4f4f4"/>
<path d="M1335 80L1330 71.34A10 10 0 0 1 1340 71.34z" fill="#f8c23e"/>
<path d="M1335 80L1340 71.34A10 10 0 0 1 1345 80z" fill="#f6953a"/>
<path d="M1335 80L1345 80A10 10 0 0 1 1340 88.66z" fill="#e5544c"/>
<path d="M1335 80L1340 88.66A10 10 0 0 1 1330 88.66z" fill="#8e5cf0"/>
<path d="M1335 80L1330 88.66A10 10 0 0 1 1325 80z" fill="#1bb0cf"/>
<path d="M1335 80L1325 80A10 10 0 0 1 1330 71.34z" fill="#45c880"/>
<rect x="1325" y="100" width="20" height="1.6" fill="#d6d6d6"/><rect x="1325" y="104.5" width="20" height="3" fill="#d6d6d6"/><rect x="1325" y="109.8" width="20" height="3.2" fill="#d6d6d6"/><rect x="1325" y="115.2" width="20" height="4.6" fill="#d6d6d6"/>
<path d="M1325 132.5h19" stroke="#d6d6d6" stroke-width="1.1" stroke-dasharray="1.5 1.5"/><path d="M1325 136.5h19" stroke="#d6d6d6" stroke-width="1.1" stroke-dasharray="3 1.5"/><path d="M1325 140.5h19" stroke="#d6d6d6" stroke-width="1.1" stroke-dasharray="6 1.5 1.5 1.5"/><path d="M1325 144.5h19" stroke="#d6d6d6" stroke-width="1.1" stroke-dasharray="5 2"/><path d="M1325 148.5h19" stroke="#d6d6d6" stroke-width="1.1"/>
<rect x="1363" y="70" width="20" height="20" fill="#fff" stroke="#cfcfcf" stroke-width="1"/>
<path d="M1506.5 77h9l-4.5 5z" fill="#d0d0d0"/>
<path d="M1353 110h79" stroke="#f0f0f0" stroke-width="1.1"/><path d="M1353 140.2h79" stroke="#f0f0f0" stroke-width="1.1"/>
<path d="M1506.5 107.3h9l-4.5 5z" fill="#d0d0d0"/>
<path d="M1506.5 137.5h9l-4.5 5z" fill="#d0d0d0"/>
<path d="M1408.3 170h9l-4.5 5z" fill="#d0d0d0"/>
<path d="M1510.5 169l5 5M1516 170.5v4h-4" fill="none" stroke="#d6d6d6" stroke-width="1.1"/>
<path d="M1535 73h-4.5v33.7h4.5M1556.5 89v17.7h-4.5" fill="none" stroke="#d6d6d6" stroke-width="1.2"/><rect x="1537" y="78" width="12.5" height="9.5" fill="#4a6f99" stroke="#6cc0f5" stroke-width="1"/><circle cx="1543.5" cy="97.5" r="6" fill="#6d7380" stroke="#a5aab3" stroke-width="1"/><path d="M1558 66.5l1.9 5.7 5.4-2.7-2.7 5.4 5.7 1.9-5.7 1.9 2.7 5.4-5.4-2.7-1.9 5.7-1.9-5.7-5.4 2.7 2.7-5.4-5.7-1.9 5.7-1.9-2.7-5.4 5.4 2.7z" fill="#f5c860"/>
<rect x="1580.5" y="71.5" width="6.5" height="5.5" fill="#4a6f99" stroke="#6cc0f5" stroke-width="1"/><circle cx="1583.8" cy="83" r="3.3" fill="#6d7380" stroke="#a5aab3" stroke-width="1"/><path d="M1590.5 69.5h3v19h-3" fill="none" stroke="#d6d6d6" stroke-width="1.1"/><path d="M1592.5 76.5l5.5 5.5m0-5.5l-5.5 5.5" stroke="#ef4a55" stroke-width="2.2"/>
<path d="M1582 101h-3v18h3M1589.5 101h3v9" fill="none" stroke="#d6d6d6" stroke-width="1.1"/><rect x="1582.5" y="103" width="5.5" height="4.8" fill="#4a6f99" stroke="#6cc0f5" stroke-width="1"/><circle cx="1585.3" cy="113.5" r="2.8" fill="#6d7380" stroke="#a5aab3" stroke-width="1"/><path d="M1589.5 120.5l.8-3 5-5 2.2 2.2-5 5z" fill="#f5c860"/><path d="M1595.3 112.5l1-1q1-.5 1.9.3t.3 1.9l-1 1z" fill="#ef5a62"/>
<path d="M1583.5 132h-3v18h3M1590.5 132h3v6" fill="none" stroke="#d6d6d6" stroke-width="1.1"/><rect x="1584" y="134" width="5.5" height="4.8" fill="none" stroke="#52c46a" stroke-width="1.1"/><circle cx="1586.8" cy="144.5" r="2.8" fill="none" stroke="#52c46a" stroke-width="1.1"/><path d="M1590.5 140.5v10.5l2.5-2.3 1.8 3.8 1.7-.8-1.8-3.7 3.3-.3z" fill="#fff" stroke="#333" stroke-width=".5"/>
<path d="M1587.8 170h9l-4.5 5z" fill="#d0d0d0"/>
<rect x="1634" y="82.5" width="35.4" height="8.3" fill="#f5c860"/><path d="M1637.5 82.5v3M1641 82.5v2M1644.5 82.5v3M1648 82.5v2M1651.5 82.5v3M1655 82.5v2M1658.5 82.5v3M1662 82.5v2M1665.5 82.5v3" stroke="#c9983c" stroke-width=".9"/>
<path d="M1649 136.2h6l-3 3.5z" fill="#d0d0d0"/>
<rect x="1706.5" y="77" width="12.5" height="10.5" fill="#e9e9e9"/><path d="M1709 80h1.5M1709 82.5h1.5M1709 85h1.5M1712 80h5M1712 82.5h5M1712 85h5" stroke="#3b82c4" stroke-width="1"/><path d="M1706 67l3.8 2-2.3 3.5 3 .5-5 4 1.2-4-2.2-.3z" fill="#f5c860"/><path d="M1698.8 73.5v11l2.7-2.5 2 4 1.8-.9-2-3.9 3.5-.3z" fill="#fff"/>
<rect x="1699" y="100.5" width="16.5" height="16" fill="none" stroke="#3fc06a" stroke-width="1.1" stroke-dasharray="2 1.2"/><rect x="1704.5" y="102.5" width="9" height="8.5" fill="#62c98a"/><rect x="1701" y="106.5" width="9" height="8.5" fill="#62c98a" stroke="#3b4453" stroke-width=".8"/><path d="M1710.5 108.5v10.5l2.5-2.3 1.8 3.8 1.7-.8-1.8-3.7 3.3-.3z" fill="#fff" stroke="#333" stroke-width=".4"/>
<rect x="1701" y="132" width="14.5" height="19" fill="#d8d8d8"/><rect x="1703.5" y="134.5" width="9.5" height="3.5" fill="#777"/>
<rect x="1703.5" y="140" width="2.5" height="2.2" fill="#666"/>
<rect x="1707" y="140" width="2.5" height="2.2" fill="#666"/>
<rect x="1710.5" y="140" width="2.5" height="2.2" fill="#666"/>
<rect x="1703.5" y="143.3" width="2.5" height="2.2" fill="#666"/>
<rect x="1707" y="143.3" width="2.5" height="2.2" fill="#666"/>
<rect x="1710.5" y="143.3" width="2.5" height="2.2" fill="#666"/>
<rect x="1703.5" y="146.6" width="2.5" height="2.2" fill="#666"/>
<rect x="1707" y="146.6" width="2.5" height="2.2" fill="#666"/>
<rect x="1710.5" y="146.6" width="2.5" height="2.2" fill="#666"/>
<path d="M1692.5 170h9l-4.5 5z" fill="#d0d0d0"/>
<rect x="1745.7" y="72" width="28" height="31" fill="#dcae6e"/><path d="M1752.5 72.5q0-2.5 3-2.8 1-2.2 4.5-2.2t4.5 2.2q3 .3 3 2.8z" fill="#f4f4f4"/><path d="M1755 80.5h16l7 7V108h-23z" fill="#dcdcdc"/><path d="M1771 80.5v7h7z" fill="#f6f6f6"/>
<path d="M1759 136.8h6l-3 3.5z" fill="#d0d0d0"/>
<rect x="1798" y="70" width="15" height="17" fill="#d4d4d4"/><path d="M1800.5 73.5h10M1800.5 76.5h10M1800.5 79.5h7" stroke="#999" stroke-width=".9"/><path d="M1806 77l9.5 9.5M1817.5 77l-9.5 9.5" stroke="#f4f4f4" stroke-width="1.5"/><circle cx="1809" cy="88" r="1.7" fill="none" stroke="#f4f4f4" stroke-width="1.1"/><circle cx="1815" cy="88" r="1.7" fill="none" stroke="#f4f4f4" stroke-width="1.1"/>
<path d="M1800 101h8.5v17H1800z" fill="#cfcfcf"/><path d="M1804 104.5h8l4.5 4.5v12H1804z" fill="#dcdcdc" stroke="#3b4453" stroke-width=".8"/><path d="M1812 104.5v4.5h4.5z" fill="#f6f6f6"/>
<path d="M1847 72h17v13.3h23v16.7h-40z" fill="#dedede"/>
<path d="M1864 134.9h6l-3 3.5z" fill="#d0d0d0"/>
<path d="M1874.5 170h9l-4.5 5z" fill="#d0d0d0"/>
<path d="M1894 169l5 5M1899.5 170.5v4h-4" fill="none" stroke="#d6d6d6" stroke-width="1.1"/>
<path d="M14.5 214.5C26 214.5 26 187.3 38 187.3H169C177.5 187.3 181 194 181 203V214.5z" fill="#2e3542"/>
<path d="M177.5 215C185 215 184.5 187.3 192.5 187.3H377.5C389.5 187.3 389.5 215 401.5 215z" fill="#3b4453"/>
<path d="M398 193.3H413Q424 193.3 424 204V211H409Q398 211 398 200z" fill="#2e3542"/>
<path d="M362.8 195.8l10 10.8m0-10.8l-10 10.8" stroke="#a9acb3" stroke-width="2"/>
<path d="M406.5 203h10.8M411.9 197.6v10.8" stroke="#b2b5bb" stroke-width="2.8"/>
<rect x="1846" y="239" width="13" height="3.6" fill="#e0e0e0"/>
<path d="M1874.5 235v-3h9v9h-3" fill="none" stroke="#e0e0e0" stroke-width="1.7"/><rect x="1872" y="235.5" width="8" height="7.5" fill="none" stroke="#e0e0e0" stroke-width="2"/>
<path d="M1897.5 233l10 10m0-10l-10 10" stroke="#e0e0e0" stroke-width="2.6"/>
<circle cx="1834.8" cy="334.3" r="55.4" fill="none" stroke="#292929" stroke-width="12.8"/>
<rect x="1808.4" y="307.7" width="53.3" height="53" fill="#9a9a9a"/><rect x="1818" y="317" width="34" height="33.8" fill="#8e9095"/>
<path d="M1846.5 432.5h10l-5 6.5z" fill="none" stroke="#9a9ca5" stroke-width="1"/>
<circle cx="1912" cy="482.5" r="3.2" fill="none" stroke="#555555" stroke-width="1"/><path d="M1910.3 480.8l3.4 3.4m0-3.4l-3.4 3.4" stroke="#555555" stroke-width=".9"/>
<path d="M1897.5 498.5q-13 0-13 13t13 13q13 0 13-13v-13z" fill="none" stroke="#555555" stroke-width="1.6"/><circle cx="1897.5" cy="511.5" r="9" fill="none" stroke="#555555" stroke-width="1.5"/><circle cx="1897.5" cy="511.5" r="5" fill="#4a4a4a"/>
<path d="M1895 535h6l-3 3z" fill="#555555"/>
<rect x="1880" y="544.5" width="36" height="1" fill="#4a4a4a"/>
<path d="M1888.5 566l-4-5q-1.5-2.5.5-3t4 2.5l2 2v-10q0-2 1.7-2t1.7 2v-3q0-2 1.8-2t1.8 2v3.5q0-2 1.7-2t1.7 2v4.5q0-1.8 1.6-1.8t1.6 1.8v9q0 6-4 10h-9q-3-2-5.1-6.5z" fill="none" stroke="#555555" stroke-width="1.3"/>
<path d="M1884 586l15 14M1902 586l-15 14" stroke="#555555" stroke-width="1.5"/><path d="M1883 585h4.5l-4.5 4.5zM1903 585h-4.5l4.5 4.5zM1883 602h4.5l-4.5-4.5z" fill="#555555"/><circle cx="1902.5" cy="603" r="4.8" fill="#383838" stroke="#555555" stroke-width="1.5"/><path d="M1906 606.5l5.5 5.5" stroke="#555555" stroke-width="2.5"/>
<path d="M1895 622h6l-3 3z" fill="#555555"/>
<path d="M1897.5 633l4.5 6.5h-2.5v17h-4v-17h-2.5z" fill="none" stroke="#555555" stroke-width="1.3"/><ellipse cx="1897.5" cy="649" rx="12.5" ry="5" fill="none" stroke="#555555" stroke-width="1.6"/><path d="M1886.5 653.5l5 3.5.5-5.5z" fill="#555555"/><rect x="1895.5" y="652" width="4" height="6.5" fill="#383838" stroke="#555555" stroke-width="1.3"/>
<path d="M1895 669.5h6l-3 3z" fill="#555555"/>
<rect x="1880" y="679" width="36" height="1" fill="#4a4a4a"/>
<rect x="1883.7" y="683.5" width="7.5" height="8" fill="none" stroke="#555555" stroke-width="1.2"/>
<rect x="1893.7" y="683.5" width="7.5" height="8" fill="none" stroke="#555555" stroke-width="1.2"/>
<rect x="1903.7" y="683.5" width="7.5" height="8" fill="none" stroke="#555555" stroke-width="1.2"/>
<rect x="1883.7" y="695.5" width="20.5" height="16" fill="none" stroke="#555555" stroke-width="1.3"/><path d="M1889.5 698.5v10l8.5-5z" fill="#555555"/>
<circle cx="1911" cy="728" r="3.2" fill="none" stroke="#555555" stroke-width="1"/><path d="M1909 728h4" stroke="#555555" stroke-width="1"/>
<path d="M18.5 879V941.3H81" fill="none" stroke="#f0f0f0" stroke-width="1.1"/><rect x="13.5" y="935.5" width="11" height="11" fill="none" stroke="#f0f0f0" stroke-width="1.1"/>
<path d="M20 860.5l7.5 7.5 7.5-7.5M27.5 868v7" fill="none" stroke="#f0f0f0" stroke-width="1.1"/>
<path d="M85.5 925.5l14.5 14.5m0-14.5l-14.5 14.5" stroke="#f0f0f0" stroke-width="1.1"/>
<path d="M1872 957.5h37" stroke="#e8e8e8" stroke-width="1.1"/><rect x="1909.5" y="946.5" width="12" height="13.5" fill="none" stroke="#e8e8e8" stroke-width="1.2"/>
<rect x="384.5" y="933" width="1.7" height="1.7" fill="#c0c0c0"/><rect x="388.2" y="933" width="1.7" height="1.7" fill="#c0c0c0"/>
<rect x="384.5" y="936" width="1.7" height="1.7" fill="#c0c0c0"/><rect x="388.2" y="936" width="1.7" height="1.7" fill="#c0c0c0"/>
<rect x="384.5" y="939" width="1.7" height="1.7" fill="#c0c0c0"/><rect x="388.2" y="939" width="1.7" height="1.7" fill="#c0c0c0"/>
<rect x="384.5" y="942" width="1.7" height="1.7" fill="#c0c0c0"/><rect x="388.2" y="942" width="1.7" height="1.7" fill="#c0c0c0"/>
<rect x="384.5" y="945" width="1.7" height="1.7" fill="#c0c0c0"/><rect x="388.2" y="945" width="1.7" height="1.7" fill="#c0c0c0"/>
<rect x="384.5" y="948" width="1.7" height="1.7" fill="#c0c0c0"/><rect x="388.2" y="948" width="1.7" height="1.7" fill="#c0c0c0"/>
<rect x="384.5" y="951" width="1.7" height="1.7" fill="#c0c0c0"/><rect x="388.2" y="951" width="1.7" height="1.7" fill="#c0c0c0"/>
<rect x="384.5" y="954" width="1.7" height="1.7" fill="#c0c0c0"/><rect x="388.2" y="954" width="1.7" height="1.7" fill="#c0c0c0"/>
<path d="M397.5 938.5l10.5 10.5m0-10.5l-10.5 10.5" stroke="#d8d8d8" stroke-width="2"/>
<path d="M426.3 950l9.5-9.5" stroke="#d0d0d0" stroke-width="2.7" stroke-linecap="round"/><circle cx="438.3" cy="937.8" r="4.3" fill="#d0d0d0"/><path d="M438 938.2l1.5-7 6 6z" fill="#222933"/>
<rect x="454.5" y="936.5" width="18.5" height="14.5" fill="#b4b4b4" stroke="#555" stroke-width="1.3"/><rect x="454.5" y="936.5" width="18.5" height="3.5" fill="#555"/><path d="M457 943l3 2-3 2M461 947.5h4" fill="none" stroke="#555" stroke-width="1"/>
<path d="M476 941.5h9l-4.5 5z" fill="#444"/>
<path d="M1524.5 946.5h10l-5-5z" fill="#444"/>
<path d="M8 961.5C14 961.5 14 983.5 20 983.5H77C83 983.5 83 961.5 89 961.5z" fill="#3b4453"/>
<path d="M87 961.5C93 961.5 93 983.5 99 983.5H157C163 983.5 163 961.5 169 961.5z" fill="#2e3542"/>
<path d="M168 961.5C174 961.5 174 983.5 180 983.5H239C245 983.5 245 961.5 251 961.5z" fill="#2e3542"/>
<path d="M254 982.5q6-1 8-9.5t8-9.5h11.5q-1 8-5.5 14t-10 5z" fill="#2e3542"/>
<path d="M263 973h10M268 968v10" stroke="#c8c8c8" stroke-width="2"/>
<path d="M1216 998.5h19M1216 1006.5h19M1221.5 993v19M1229.5 993v19" stroke="#e2e2e2" stroke-width="1.2"/>
<rect x="1248" y="995.5" width="2.8" height="2.8" fill="#e2e2e2"/>
<rect x="1254" y="995.5" width="2.8" height="2.8" fill="#e2e2e2"/>
<rect x="1260" y="995.5" width="2.8" height="2.8" fill="#e2e2e2"/>
<rect x="1248" y="1001.5" width="2.8" height="2.8" fill="#e2e2e2"/>
<rect x="1254" y="1001.5" width="2.8" height="2.8" fill="#e2e2e2"/>
<rect x="1260" y="1001.5" width="2.8" height="2.8" fill="#e2e2e2"/>
<rect x="1248" y="1007.5" width="2.8" height="2.8" fill="#e2e2e2"/>
<rect x="1254" y="1007.5" width="2.8" height="2.8" fill="#e2e2e2"/>
<rect x="1260" y="1007.5" width="2.8" height="2.8" fill="#e2e2e2"/>
<path d="M1276.1 1000h9l-4.5 5z" fill="#d0d0d0"/>
<path d="M1299.5 999.5h8M1303.5 995.5v8" stroke="#fff" stroke-width="1.2"/><rect x="1306.5" y="1005" width="12.5" height="5.5" fill="#fff"/><rect x="1308" y="1006.5" width="1.5" height="2.5" fill="#5f8fc6"/>
<path d="M1331 993v18.5h18.5" fill="none" stroke="#e2e2e2" stroke-width="1.3"/><path d="M1331 1006.5h5v5" fill="none" stroke="#e2e2e2" stroke-width="1"/>
<circle cx="1368.5" cy="1002.5" r="8" fill="none" stroke="#e2e2e2" stroke-width="1.3"/><path d="M1368.5 1002.5h11.5M1368.5 1002.5l8.5-9" stroke="#e2e2e2" stroke-width="1.1"/>
<path d="M1390.1 1000h9l-4.5 5z" fill="#d0d0d0"/>
<path d="M1412.5 994l15 16" stroke="#e0444e" stroke-width="1.1"/><path d="M1420 993v18" stroke="#3fc06a" stroke-width="1.2"/><rect x="1418.3" y="1000.3" width="3.4" height="3.4" fill="#3b4453" stroke="#e2e2e2" stroke-width="1"/>
<path d="M1440.5 1000h9l-4.5 5z" fill="#d0d0d0"/>
<path d="M1461 1010.5h19.5" stroke="#aaa" stroke-width="1.6"/><path d="M1461.5 1010l17-16" stroke="#e2e2e2" stroke-width="1.2"/><rect x="1467.3" y="1001.3" width="3.2" height="3.2" fill="#e2e2e2"/>
<rect x="1492.5" y="997" width="17.5" height="15.5" fill="none" stroke="#fff" stroke-width="1.4"/><rect x="1490.5" y="994" width="5" height="5" fill="#5f8fc6" stroke="#fff" stroke-width="1.1"/>
<path d="M1520.8 1000h9l-4.5 5z" fill="#d0d0d0"/>
<path d="M1542 996h19.5M1542 1009.5h19.5" stroke="#e2e2e2" stroke-width="2.2"/><path d="M1542 1000.5h19.5M1542 1005h19.5" stroke="#e2e2e2" stroke-width="1"/><path d="M1542 1000.5h8" stroke="#e2e2e2" stroke-width="2.8"/><path d="M1542 1005h12" stroke="#e2e2e2" stroke-width="2.8"/>
<path d="M1583.5 992L1587.3 1003Q1588.5 1009 1592 1013.5L1583.5 1009L1575 1013.5Q1578.5 1009 1579.7 1003z" fill="#fff"/>
<circle cx="1592" cy="996" r="2.6" fill="none" stroke="#fff" stroke-width="1"/>
<path d="M1614 992L1617.8 1003Q1619 1009 1622.5 1013.5L1614 1009L1605.5 1013.5Q1609 1009 1610.2 1003z" fill="#e2e2e2"/>
<path d="M1622.5 991l-3 5h2.5l-1.5 4.5 4.5-6h-2.5z" fill="#e2e2e2"/>
<path d="M1644.5 992L1648.3 1003Q1649.5 1009 1653 1013.5L1644.5 1009L1636 1013.5Q1639.5 1009 1640.7 1003z" fill="#e2e2e2"/>
<path d="M1687.5 1000h9l-4.5 5z" fill="#d0d0d0"/>
<path d="M1730.4 1003.5L1729.9 1006.1L1726.8 1006.1L1725.8 1007.7L1726.9 1010.5L1724.7 1011.9L1722.6 1009.8L1720.7 1010.2L1719.5 1013L1716.9 1012.5L1716.9 1009.4L1715.3 1008.4L1712.5 1009.5L1711.1 1007.3L1713.2 1005.2L1712.8 1003.3L1710 1002.1L1710.5 999.5L1713.6 999.5L1714.6 997.9L1713.5 995.1L1715.7 993.7L1717.8 995.8L1719.7 995.4L1720.9 992.6L1723.5 993.1L1723.5 996.2L1725.1 997.2L1727.9 996.1L1729.3 998.3L1727.2 1000.4L1727.6 1002.3z" fill="#e2e2e2"/><circle cx="1720.2" cy="1002.8" r="3.8" fill="#3b4453"/>
<path d="M1740.7 1000h9l-4.5 5z" fill="#d0d0d0"/>
<path d="M1761.7 1003h19M1771.2 993.5v19" stroke="#f4f4f4" stroke-width="2.4"/>
<rect x="1794.5" y="994" width="8" height="6.5" fill="none" stroke="#e2e2e2" stroke-width="1.1"/><path d="M1797.5 1012.5l4.2-7.5 4.2 7.5z" fill="none" stroke="#e2e2e2" stroke-width="1.1"/><circle cx="1809.5" cy="999" r="3.5" fill="none" stroke="#e2e2e2" stroke-width="1.1"/>
<rect x="1826.5" y="1000" width="13" height="9.5" fill="#e5a823"/><path d="M1837.5 1006.5l4.5 4.5 9.5-9.5" fill="none" stroke="#3fb950" stroke-width="3.2"/><circle cx="1842" cy="999.5" r="4" fill="#2f6fc9"/>
<rect x="1865" y="999.5" width="19" height="10.5" fill="none" stroke="#e2e2e2" stroke-width="1.1"/><path d="M1867.5 1006.5v-4.5h4.5" fill="none" stroke="#e2e2e2" stroke-width="1.1"/>
<rect x="1895" y="1009.5" width="20" height="2.6" fill="#e2e2e2"/>
</svg>
<span class="t" style="left:4.8px;top:-1.1px;font-size:28px;color:#c8222a;font-weight:bold;font-style:italic;transform:scaleX(0.9200)">A</span>
<span class="t" style="left:406px;top:6.46px;font-size:15.4px;color:#6cc0f5;transform:scaleX(0.8902)">Share</span>
<span class="t" style="left:646px;top:7.26px;font-size:15.4px;color:#f0f0f0;transform:scaleX(0.9606)">Autodesk AutoCAD 2022</span>
<span class="t" style="left:826px;top:7.26px;font-size:15.4px;color:#f0f0f0;transform:scaleX(0.9378)">Bản vẽ Cad kia-carens.dwg</span>
<span class="t" style="left:1219px;top:6.23px;font-size:14.5px;color:#b9bec8;font-style:italic;transform:scaleX(0.9042)">Type a keyword or phrase</span>
<span class="t" style="left:1501px;top:6.46px;font-size:15.4px;color:#f0f0f0;transform:scaleX(0.9375)">Sign In</span>
<span class="t" style="left:14.75px;top:39.46px;font-size:15.4px;color:#ffffff;transform:scaleX(0.9756)">Home</span>
<span class="t" style="left:80.6px;top:39.46px;font-size:15.4px;color:#d6d6d6;transform:scaleX(0.9077)">Insert</span>
<span class="t" style="left:140px;top:39.46px;font-size:15.4px;color:#d6d6d6;transform:scaleX(0.9774)">Annotate</span>
<span class="t" style="left:226px;top:39.46px;font-size:15.4px;color:#d6d6d6;transform:scaleX(0.9459)">Parametric</span>
<span class="t" style="left:319.5px;top:39.46px;font-size:15.4px;color:#d6d6d6;transform:scaleX(0.9758)">View</span>
<span class="t" style="left:376px;top:39.46px;font-size:15.4px;color:#d6d6d6;transform:scaleX(0.9589)">Manage</span>
<span class="t" style="left:454px;top:39.46px;font-size:15.4px;color:#d6d6d6;transform:scaleX(0.9935)">Output</span>
<span class="t" style="left:523.7px;top:39.46px;font-size:15.4px;color:#d6d6d6;transform:scaleX(0.9873)">Collaborate</span>
<span class="t" style="left:626.3px;top:39.46px;font-size:15.4px;color:#d6d6d6;transform:scaleX(0.9135)">Express Tools</span>
<span class="t" style="left:1719.8px;top:4.49px;font-size:17.5px;color:#777b82;transform:scaleX(0.8400)">?</span>
<span class="t" style="left:13px;top:114.26px;font-size:15.4px;color:#f2f2f2;transform:scaleX(0.9310)">Line</span>
<span class="t" style="left:54px;top:114.26px;font-size:15.4px;color:#f2f2f2;transform:scaleX(0.9444)">Polyline</span>
<span class="t" style="left:123px;top:114.56px;font-size:15.4px;color:#f2f2f2;transform:scaleX(0.9487)">Circle</span>
<span class="t" style="left:187px;top:114.56px;font-size:15.4px;color:#f2f2f2;transform:scaleX(0.9565)">Arc</span>
<span class="t" style="left:113.75px;top:163.76px;font-size:15.4px;color:#f2f2f2;transform:scaleX(0.9403)">Draw</span>
<span class="t" style="left:311px;top:71.26px;font-size:15.4px;color:#f2f2f2;transform:scaleX(0.9737)">Move</span>
<span class="t" style="left:312px;top:102.26px;font-size:15.4px;color:#f2f2f2;transform:scaleX(0.9444)">Copy</span>
<span class="t" style="left:312px;top:133.26px;font-size:15.4px;color:#f2f2f2;transform:scaleX(0.9388)">Stretch</span>
<span class="t" style="left:403px;top:71.26px;font-size:15.4px;color:#f2f2f2;transform:scaleX(0.9778)">Rotate</span>
<span class="t" style="left:402px;top:102.26px;font-size:15.4px;color:#f2f2f2;transform:scaleX(1.0250)">Mirror</span>
<span class="t" style="left:402px;top:133.26px;font-size:15.4px;color:#f2f2f2;transform:scaleX(0.8974)">Scale</span>
<span class="t" style="left:490.6px;top:71.26px;font-size:15.4px;color:#f2f2f2;transform:scaleX(0.9300)">Trim</span>
<span class="t" style="left:491px;top:102.26px;font-size:15.4px;color:#f2f2f2;transform:scaleX(0.9697)">Fillet</span>
<span class="t" style="left:490.6px;top:133.26px;font-size:15.4px;color:#f2f2f2;transform:scaleX(0.9162)">Array</span>
<span class="t" style="left:404px;top:163.76px;font-size:15.4px;color:#f2f2f2;transform:scaleX(1.0222)">Modify</span>
<span class="t" style="left:606px;top:63.02px;font-size:49px;color:#dcdcdc;transform:scaleX(1.0606)">A</span>
<span class="t" style="left:610.6px;top:114.26px;font-size:15.4px;color:#f2f2f2;transform:scaleX(0.9357)">Text</span>
<span class="t" style="left:653.6px;top:114.26px;font-size:15.4px;color:#f2f2f2;transform:scaleX(0.9616)">Dimension</span>
<span class="t" style="left:759.4px;top:133.96px;font-size:15.4px;color:#f2f2f2;transform:scaleX(0.9297)">Table</span>
<span class="t" style="left:653.6px;top:163.76px;font-size:15.4px;color:#f2f2f2;transform:scaleX(0.9878)">Annotation</span>
<span class="t" style="left:826.5px;top:114.26px;font-size:15.4px;color:#f2f2f2;transform:scaleX(0.8949)">Layer</span>
<span class="t" style="left:810.6px;top:134.26px;font-size:15.4px;color:#f2f2f2;transform:scaleX(0.9457)">Properties</span>
<span class="t" style="left:985px;top:71.96px;font-size:15.4px;color:#f2f2f2;transform:scaleX(0.8444)">0</span>
<span class="t" style="left:1033.4px;top:102.26px;font-size:15.4px;color:#f2f2f2;transform:scaleX(0.9387)">Make Current</span>
<span class="t" style="left:1033.4px;top:133.26px;font-size:15.4px;color:#f2f2f2;transform:scaleX(0.9341)">Match Layer</span>
<span class="t" style="left:946.5px;top:163.76px;font-size:15.4px;color:#f2f2f2;transform:scaleX(0.8804)">Layers</span>
<span class="t" style="left:1154.6px;top:113.26px;font-size:15.4px;color:#f2f2f2;transform:scaleX(0.9051)">Insert</span>
<span class="t" style="left:1168.4px;top:163.76px;font-size:15.4px;color:#f2f2f2;transform:scaleX(0.9500)">Block</span>
<span class="t" style="left:1264.7px;top:114.76px;font-size:15.4px;color:#f2f2f2;transform:scaleX(0.9524)">Match</span>
<span class="t" style="left:1251.8px;top:135.26px;font-size:15.4px;color:#f2f2f2;transform:scaleX(0.9457)">Properties</span>
<span class="t" style="left:1395.4px;top:72.76px;font-size:15.4px;color:#f2f2f2;transform:scaleX(0.9821)">White</span>
<span class="t" style="left:1435.5px;top:102.76px;font-size:15.4px;color:#f2f2f2;transform:scaleX(0.9018)">ByLayer</span>
<span class="t" style="left:1435.5px;top:132.96px;font-size:15.4px;color:#f2f2f2;transform:scaleX(0.9018)">ByLayer</span>
<span class="t" style="left:1334.3px;top:163.76px;font-size:15.4px;color:#f2f2f2;transform:scaleX(0.9529)">Properties</span>
<span class="t" style="left:1528.3px;top:114.26px;font-size:15.4px;color:#f2f2f2;transform:scaleX(0.9419)">Group</span>
<span class="t" style="left:1533.5px;top:163.76px;font-size:15.4px;color:#f2f2f2;transform:scaleX(0.9300)">Groups</span>
<span class="t" style="left:1624.6px;top:115.26px;font-size:15.4px;color:#f2f2f2;transform:scaleX(0.9183)">Measure</span>
<span class="t" style="left:1634.6px;top:163.76px;font-size:15.4px;color:#f2f2f2;transform:scaleX(0.9800)">Utilities</span>
<span class="t" style="left:1745.7px;top:116.26px;font-size:15.4px;color:#f2f2f2;transform:scaleX(0.8538)">Paste</span>
<span class="t" style="left:1745.3px;top:163.76px;font-size:15.4px;color:#f2f2f2;transform:scaleX(0.9879)">Clipboard</span>
<span class="t" style="left:1851.6px;top:115.26px;font-size:15.4px;color:#f2f2f2;transform:scaleX(0.8571)">Base</span>
<span class="t" style="left:1834px;top:163.76px;font-size:15.4px;color:#f2f2f2;transform:scaleX(0.9636)">View</span>
<span class="t" style="left:39.5px;top:195.26px;font-size:15.4px;color:#d0d0d0;transform:scaleX(0.9242)">Start</span>
<span class="t" style="left:193.75px;top:195.26px;font-size:15.4px;color:#ffffff;font-weight:bold;transform:scaleX(0.9265)">Bản vẽ Cad kia-carens*</span>
<span class="t" style="left:1824px;top:326.58px;font-size:15.5px;color:#3b3f46;font-weight:bold;transform:scaleX(0.6875)">TOP</span>
<span class="t" style="left:1827.5px;top:265.38px;font-size:22px;color:#9a9a9a;font-weight:bold;transform:scaleX(0.9375)">N</span>
<span class="t" style="left:1766.7px;top:323.98px;font-size:22px;color:#9a9a9a;font-weight:bold;transform:scaleX(1.0000)">W</span>
<span class="t" style="left:1887px;top:323.98px;font-size:22px;color:#9a9a9a;font-weight:bold;transform:scaleX(0.8667)">E</span>
<span class="t" style="left:1828.5px;top:382.38px;font-size:22px;color:#9a9a9a;font-weight:bold;transform:scaleX(0.9000)">S</span>
<span class="t" style="left:1810px;top:428.87px;font-size:13.5px;color:#4a4c55;transform:scaleX(0.9062)">WCS</span>
<span class="t m" style="left:458.5px;top:882.9px;font-size:15px;color:#414141;transform:scaleX(0.9694)">Command:</span>
<span class="t m" style="left:458.5px;top:907.5px;font-size:15px;color:#414141;transform:scaleX(0.9954)">Command: _.erase 2 found</span>
<span class="t m" style="left:495px;top:937.8px;font-size:15px;color:#555555;font-style:italic;transform:scaleX(0.9873)">Type a command</span>
<span class="t" style="left:28.7px;top:965.26px;font-size:15.4px;color:#ffffff;font-weight:bold;transform:scaleX(0.9841)">Model</span>
<span class="t" style="left:101.7px;top:965.26px;font-size:15.4px;color:#d4d4d4;transform:scaleX(0.9091)">Layout1</span>
<span class="t" style="left:182.5px;top:965.26px;font-size:15.4px;color:#d4d4d4;transform:scaleX(0.9236)">Layout2</span>
<span class="t" style="left:1153px;top:995.38px;font-size:15.5px;color:#f2f2f2;transform:scaleX(0.9218)">MODEL</span>
<span class="t" style="left:1666.9px;top:995.88px;font-size:15.5px;color:#f2f2f2;transform:scaleX(0.6864)">1:1</span>
<div style="left:1801.5px;top:965.5px;width:124px;height:39px;background:#212833;border-radius:7px;box-shadow:0 1px 5px rgba(0,0,0,.55);border:1px solid #2b3340;box-sizing:border-box"></div>
<span class="t" style="left:1812.7px;top:976.93px;font-size:15.8px;color:#ffffff;transform:scaleX(0.9626)">Show desktop</span>
</div>
</body></html>
